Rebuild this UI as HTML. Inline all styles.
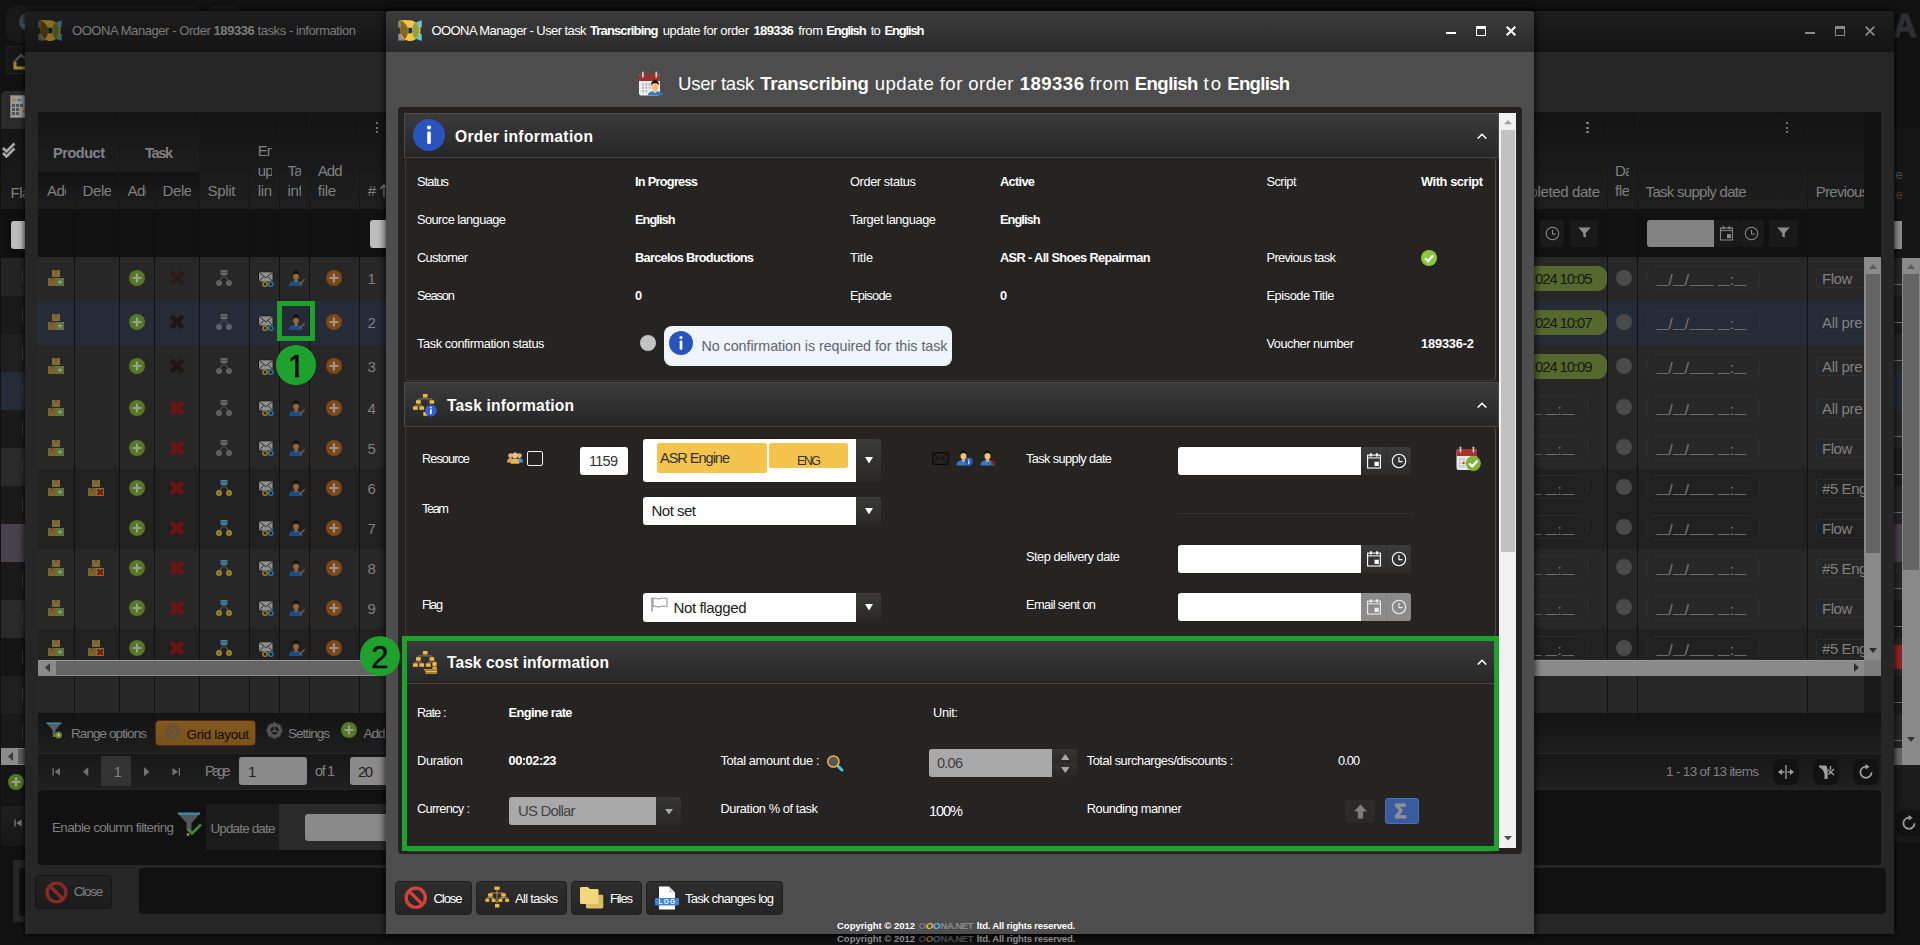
<!DOCTYPE html>
<html lang="en"><head><meta charset="utf-8"><title>OOONA Manager - User task update</title>
<style>
html,body{margin:0;padding:0;background:#111112;}
body{width:1920px;height:945px;position:relative;overflow:hidden;font-family:"Liberation Sans",sans-serif;}
div,span.t,svg.i{position:absolute;box-sizing:border-box;}
span.t{line-height:1;white-space:nowrap;}
b{font-weight:700;}

.hd{background:linear-gradient(#141414,#1e1e1e);}
.vl{background:#0e0e0e;width:1px;}

</style></head><body>
<svg width="0" height="0" style="position:absolute"><defs>

<symbol id="logo" viewBox="0 0 24 22">
<rect x="0" y="0.800" width="3" height="7" fill="#8d8f96"/>
<path d="M0 14 L3 14 L7 21 L0 21Z" fill="#8d8f96"/>
<path d="M18.500 2.300 L24 0.200 L24 7.300 L21.500 8Z" fill="#5bc8f5"/>
<path d="M18.500 19.500 L24 21.600 L24 14.300 L21.500 13.600Z" fill="#5bc8f5"/>
<path d="M2.200 0 L12 0.200 C17.500 0.500 22.800 5 22.800 10.800 C22.800 16.500 18 21.400 12.400 21.400 C8 21.400 4 19 2.500 15Z" fill="#f5c547"/>
<path d="M2.200 0 C6 2 10 6 10 10.800 C10 15 8.500 17.500 6.800 19.400 C4 17.500 2.200 14 2.200 10.800Z" fill="#86691f"/>
<path d="M17.900 2 C22.600 6 22.600 15.500 17.900 19.700 C13 15.500 13 6 17.900 2Z" fill="#94a046"/>
<rect x="9.300" y="8" width="4.800" height="5.600" rx="1" fill="#2e2e2e"/>
<rect x="9.300" y="8.300" width="1.200" height="5" fill="#8d8f96"/>
<path d="M13.500 8.200 C14.800 9.500 14.800 12.200 13.500 13.500 C15.200 12.600 15.600 9.600 13.500 8.200Z" fill="#5bc8f5"/>
</symbol>
<symbol id="logod" viewBox="0 0 24 22">
<rect x="0" y="0.800" width="3" height="7" fill="#46484b"/>
<path d="M0 14 L3 14 L7 21 L0 21Z" fill="#46484b"/>
<path d="M18.500 2.300 L24 0.200 L24 7.300 L21.500 8Z" fill="#2e647b"/>
<path d="M18.500 19.500 L24 21.600 L24 14.300 L21.500 13.600Z" fill="#2e647b"/>
<path d="M2.200 0 L12 0.200 C17.500 0.500 22.800 5 22.800 10.800 C22.800 16.500 18 21.400 12.400 21.400 C8 21.400 4 19 2.500 15Z" fill="#8b6f26"/>
<path d="M2.200 0 C6 2 10 6 10 10.800 C10 15 8.500 17.500 6.800 19.400 C4 17.500 2.200 14 2.200 10.800Z" fill="#43340f"/>
<path d="M17.900 2 C22.600 6 22.600 15.500 17.900 19.700 C13 15.500 13 6 17.900 2Z" fill="#4a5023"/>
<rect x="9.300" y="8" width="4.800" height="5.600" rx="1" fill="#171717"/>
<rect x="9.300" y="8.300" width="1.200" height="5" fill="#46484b"/>
<path d="M13.500 8.200 C14.800 9.500 14.800 12.200 13.500 13.500 C15.200 12.600 15.600 9.600 13.500 8.200Z" fill="#2e647b"/>
</symbol>
<symbol id="calperson" viewBox="0 0 26 26">
<rect x="1" y="3" width="21" height="21.5" rx="2" fill="#eceef0"/>
<path d="M1 5 a2 2 0 0 1 2 -2 h17 a2 2 0 0 1 2 2 v5 h-21z" fill="#9c322e"/>
<rect x="4" y="0.6" width="1.8" height="6" rx="0.9" fill="#c9d0d4"/><rect x="17.4" y="0.6" width="1.8" height="6" rx="0.9" fill="#c9d0d4"/>
<g fill="#b9bbbe"><rect x="4" y="12.3" width="2" height="2.3"/><rect x="7.3" y="12.3" width="2" height="2.3"/><rect x="10.6" y="12.3" width="2" height="2.3"/><rect x="4" y="15.7" width="2" height="2.3"/><rect x="7.3" y="15.7" width="2" height="2.3"/><rect x="10.6" y="15.7" width="2" height="2.3"/><rect x="4" y="19.1" width="2" height="2.3"/><rect x="7.3" y="19.1" width="2" height="2.3"/></g>
<path d="M10 24.3 C10 21 13 20.2 17 20 C21 20.2 24.6 21.2 25 24.3Z" fill="#2f7bc6"/>
<path d="M14.7 19.5 h4.6 l0 1.2 l-2.3 1.6 l-2.3 -1.6z" fill="#f3be79"/>
<ellipse cx="17" cy="15.2" rx="3.5" ry="4.6" fill="#f3be79"/>
<path d="M13.3 14.6 C12.8 10.5 15 9.2 17 9.2 C19.3 9.2 21.3 10.6 20.7 14.6 C20.2 12.6 19 12.3 17 12.3 C15 12.3 13.8 12.7 13.3 14.6Z" fill="#16120f"/>
</symbol>
<symbol id="info" viewBox="0 0 32 32">
<circle cx="16" cy="16" r="16" fill="#2a53be"/>
<circle cx="16" cy="8.6" r="2.1" fill="#fff"/>
<rect x="14.2" y="12.6" width="3.6" height="12.4" rx="1.3" fill="#fff"/>
</symbol>
<symbol id="org" viewBox="0 0 24 24">
<g stroke="#c9a44a" stroke-width="1" fill="none"><path d="M12 5 v3.5 M5 12 v-2.5 h14 v2.5 M12 8.5 v3"/></g>
<g fill="#f1b93c"><rect x="9.5" y="1" width="5" height="4.2"/><rect x="2.4" y="11.5" width="5" height="4.2"/><rect x="9.5" y="11.5" width="5" height="4.2"/><rect x="16.6" y="11.5" width="5" height="4.2"/></g>
</symbol>
<symbol id="taskinfo" viewBox="0 0 24 24">
<g stroke="#8e8a80" stroke-width="0.800" fill="none"><path d="M12.250 3.500 V4.900 M5.400 6.200 V4.900 H18.900 V6.200 M5.400 9.700 V11.200 M2.400 12.300 V11.200 H8.700 V12.300"/></g>
<g fill="#f1b93c"><rect x="9.900" y="0" width="4.700" height="3.500"/><rect x="3" y="6.200" width="4.800" height="3.500"/><rect x="16.500" y="6.200" width="4.700" height="3.500"/><rect x="0" y="12.300" width="4.800" height="3.500"/><rect x="6.300" y="12.300" width="4.800" height="3.500"/><rect x="10.300" y="18" width="4.100" height="3.800"/></g>
<circle cx="17.900" cy="16.600" r="5.900" fill="#2f5fd0"/><circle cx="17.900" cy="13.600" r="0.950" fill="#fff"/><rect x="17.100" y="15.300" width="1.600" height="4.700" fill="#fff"/>
</symbol>
<symbol id="taskcost" viewBox="0 0 24 24">
<g stroke="#8e8a80" stroke-width="0.800" fill="none"><path d="M12.250 3.500 V4.900 M5.400 6.200 V4.900 H18.900 V6.200 M5.400 9.700 V11.200 M2.400 12.300 V11.200 H8.700 V12.300"/></g>
<g fill="#f1b93c"><rect x="9.900" y="0" width="4.700" height="3.500"/><rect x="3" y="6.200" width="4.800" height="3.500"/><rect x="16.500" y="6.200" width="4.700" height="3.500"/><rect x="0" y="12.300" width="4.800" height="3.500"/><rect x="6.300" y="12.300" width="4.800" height="3.500"/><rect x="12.900" y="12.300" width="4.800" height="3.500"/></g>
<path d="M18.900 9.700 V11 M15.300 12.300 V11.200 H18.900" stroke="#8e8a80" stroke-width="0.800" fill="none"/>
<circle cx="21.500" cy="13" r="2.200" fill="#f1b93c" stroke="#d9a02c" stroke-width="0.600"/>
<g fill="#e3ad3a"><rect x="19.300" y="15.600" width="4.500" height="2.300"/><rect x="10.900" y="18.200" width="13.100" height="1.300"/><rect x="12.400" y="19.900" width="11.600" height="1.200" fill="#f1c04a"/><rect x="12.400" y="21.400" width="11.600" height="1.300"/></g>
</symbol>
<symbol id="alltasks" viewBox="0 0 24 24">
<g stroke="#b9a06a" stroke-width="0.900" fill="none"><path d="M12 3.700 V7 M5.400 8 V7 H18.600 V8 M5.400 10.400 V11.700 M2.300 12.700 V11.700 H8.600 V12.700 M18.600 10.400 V11.700 M15.400 12.700 V11.700 H22 V12.700 M12 7 V16.600 M12 16.600"/><path d="M5.400 11.700 L12 16.600 L18.600 11.700" stroke-width="0.600"/></g>
<g fill="#f1b93c"><rect x="9.400" y="0.600" width="5.200" height="3.300"/><rect x="3.100" y="7.400" width="4.600" height="3.200"/><rect x="16.200" y="7.400" width="4.600" height="3.200"/>
<rect x="0.400" y="12.700" width="3.800" height="3.200"/><rect x="6.700" y="12.700" width="3.800" height="3.200"/><rect x="13.500" y="12.700" width="3.800" height="3.200"/><rect x="20.200" y="12.700" width="3.800" height="3.200"/><rect x="10" y="17.900" width="4.400" height="3.600"/></g>
</symbol>
<symbol id="noentry" viewBox="0 0 24 24">
<circle cx="12" cy="12" r="9.8" fill="none" stroke="#d6413c" stroke-width="3.4"/>
<path d="M5.2 5.2 L18.8 18.8" stroke="#d6413c" stroke-width="3.4"/>
</symbol>
<symbol id="noentryd" viewBox="0 0 24 24">
<circle cx="12" cy="12" r="9.8" fill="none" stroke="#8a2a27" stroke-width="3.4"/>
<path d="M5.2 5.2 L18.8 18.8" stroke="#8a2a27" stroke-width="3.4"/>
</symbol>
<symbol id="folders" viewBox="0 0 24 24">
<path d="M6 7 h7 l2 2 h7.5 a1.5 1.5 0 0 1 1.500 1.500 v11 a1.500 1.500 0 0 1 -1.500 1.500 h-15 a1.500 1.500 0 0 1 -1.500 -1.500z" fill="#d9bb62"/>
<path d="M0 2.500 a1.500 1.500 0 0 1 1.500 -1.500 h6.500 l2 2 h7.500 a1.500 1.500 0 0 1 1.500 1.500 v12.500 a1.500 1.500 0 0 1 -1.500 1.500 h-16 a1.500 1.500 0 0 1 -1.500 -1.500z" fill="#f2d77c"/>
</symbol>
<symbol id="logfile" viewBox="0 0 24 24">
<path d="M4 0.500 h10 l6 6 v17 h-16z" fill="#fff"/><path d="M14 0.500 l6 6 h-6z" fill="#d5d9dd"/>
<rect x="0" y="12" width="24" height="7.600" rx="1" fill="#3f83d6"/>
</symbol>
<symbol id="people" viewBox="0 0 16 12">
<circle cx="3.600" cy="3.600" r="2.400" fill="#e8b27a"/><path d="M0 10.500 c0 -3.500 2 -4.500 3.600 -4.500 s3.600 1 3.600 4.500z" fill="#e0a050"/>
<circle cx="12.400" cy="3.600" r="2.400" fill="#e8b27a"/><path d="M8.800 10.500 c0 -3.500 2 -4.500 3.600 -4.500 s3.600 1 3.600 4.500z" fill="#4f8fd0"/>
<circle cx="8" cy="3.400" r="2.800" fill="#f0c08a"/><path d="M3.600 11.800 c0 -4.200 2.400 -5.400 4.400 -5.400 s4.400 1.200 4.400 5.400z" fill="#e6b84c"/>
</symbol>
<symbol id="env" viewBox="0 0 17 13">
<rect x="0.600" y="0.600" width="15.800" height="11.800" rx="1.500" fill="none" stroke="#0b0b0b" stroke-width="1.100"/>
<path d="M1 1.200 L8.500 7.500 L16 1.200 M1 12 L6.300 6 M16 12 L10.700 6" fill="none" stroke="#0b0b0b" stroke-width="1"/>
</symbol>
<symbol id="userinfo" viewBox="0 0 17 17">
<path d="M0.500 16.500 C0.500 12.500 3 11.500 7.500 11.300 C12 11.500 14.500 12.500 14.500 16.500Z" fill="#2f7bc6"/>
<path d="M5.800 10.500 h3.400 v1.200 l-1.700 1.300 l-1.700 -1.300z" fill="#f3be79"/>
<ellipse cx="7.500" cy="6.800" rx="3" ry="3.900" fill="#f3be79"/>
<path d="M4.300 6.400 C3.900 2.500 5.800 1.300 7.500 1.300 C9.400 1.300 11.200 2.600 10.700 6.400 C10.200 4.600 9.200 4.300 7.500 4.300 C5.800 4.300 4.800 4.700 4.300 6.400Z" fill="#16120f"/>
<circle cx="12.800" cy="12.600" r="4" fill="#2a53be"/><rect x="12.100" y="10.200" width="1.400" height="1.300" fill="#cfe0ff"/><rect x="12.100" y="12" width="1.400" height="3.200" fill="#cfe0ff"/>
</symbol>
<symbol id="userx" viewBox="0 0 17 17">
<path d="M0.500 16.500 C0.500 12.500 3 11.500 7.500 11.300 C12 11.500 14.500 12.500 14.500 16.500Z" fill="#2f7bc6"/>
<path d="M5.800 10.500 h3.400 v1.200 l-1.700 1.300 l-1.700 -1.300z" fill="#f3be79"/>
<ellipse cx="7.500" cy="6.800" rx="3" ry="3.900" fill="#f3be79"/>
<path d="M4.300 6.400 C3.900 2.500 5.800 1.300 7.500 1.300 C9.400 1.300 11.200 2.600 10.700 6.400 C10.200 4.600 9.200 4.300 7.500 4.300 C5.800 4.300 4.800 4.700 4.300 6.400Z" fill="#16120f"/>
<path d="M11.300 12.300 l3.600 3.600 M14.900 12.300 l-3.600 3.600" stroke="#a01818" stroke-width="1.500"/>
</symbol>
<symbol id="cal" viewBox="0 0 14 16">
<rect x="0.600" y="2.100" width="12.800" height="12.900" fill="none" stroke="currentColor" stroke-width="1.100"/>
<path d="M0.600 4.900 H13.400" stroke="currentColor" stroke-width="1"/>
<rect x="2.900" y="0.300" width="1.900" height="3.200" fill="currentColor"/><rect x="9.100" y="0.300" width="1.900" height="3.200" fill="currentColor"/>
<rect x="7.500" y="8.700" width="4.300" height="4.300" fill="currentColor"/>
</symbol>
<symbol id="clock" viewBox="0 0 16 16">
<circle cx="8" cy="8" r="6.700" fill="none" stroke="currentColor" stroke-width="1.100"/>
<path d="M8 4 V8.600 H11.600" fill="none" stroke="currentColor" stroke-width="1.100"/>
</symbol>
<symbol id="calcheck" viewBox="0 0 25 25">
<rect x="0.500" y="3" width="20.500" height="21" rx="2" fill="#e6e8ea"/>
<path d="M0.500 5 a2 2 0 0 1 2 -2 h16.500 a2 2 0 0 1 2 2 v5 h-20.500z" fill="#a7332f"/>
<rect x="3.600" y="0.500" width="1.700" height="6" rx="0.850" fill="#c9d0d4"/><rect x="16.600" y="0.500" width="1.700" height="6" rx="0.850" fill="#c9d0d4"/>
<g fill="#bcbec1"><rect x="3.300" y="12.500" width="2" height="2.200"/><rect x="6.600" y="12.500" width="2" height="2.200"/><rect x="3.300" y="15.900" width="2" height="2.200"/><rect x="3.300" y="19.300" width="2" height="2.200"/><rect x="6.600" y="19.300" width="2" height="2.200"/></g>
<rect x="6.600" y="15.900" width="2" height="2.200" fill="#c0322c"/>
<circle cx="17.300" cy="17.300" r="7.600" fill="#7eb338"/>
<path d="M13.200 17.500 L16.200 20.300 L21.600 14.600" fill="none" stroke="#fff" stroke-width="2.300"/>
</symbol>
<symbol id="flag" viewBox="0 0 17 15">
<path d="M1 0.500 V14.500" stroke="#8a8a8a" stroke-width="1.300" fill="none"/>
<path d="M2 1.500 C4.500 0 6.500 3 9 1.800 C11.500 0.600 13.500 1.200 16 1.500 V9.500 C13.500 9.200 11.500 8.600 9 9.800 C6.500 11 4.500 8 2 9.500Z" fill="#fff" stroke="#8a8a8a" stroke-width="1"/>
</symbol>
<symbol id="mag" viewBox="0 0 17 17">
<path d="M11.400 11.500 L14.900 15" stroke="#5bc0e8" stroke-width="3" stroke-linecap="round"/>
<circle cx="6.400" cy="6.500" r="5.600" fill="#595657" stroke="#f0b93a" stroke-width="1.500"/>
</symbol>
<symbol id="uparrow" viewBox="0 0 16 16">
<path d="M8 0.500 L15 8 H10.800 V15.500 H5.200 V8 H1Z" fill="#7d7d7d"/>
</symbol>
<symbol id="chev" viewBox="0 0 10 6"><path d="M0.700 5.600 L5 1.200 L9.300 5.600" fill="none" stroke="#fff" stroke-width="1.500"/></symbol>
<symbol id="tri" viewBox="0 0 10 6" preserveAspectRatio="none"><path d="M0 0 H10 L5 6Z" fill="currentColor"/></symbol>
<symbol id="triu" viewBox="0 0 10 6" preserveAspectRatio="none"><path d="M0 6 H10 L5 0Z" fill="currentColor"/></symbol>
<symbol id="tril" viewBox="0 0 6 10" preserveAspectRatio="none"><path d="M6 0 V10 L0 5Z" fill="currentColor"/></symbol>
<symbol id="trir" viewBox="0 0 6 10" preserveAspectRatio="none"><path d="M0 0 V10 L6 5Z" fill="currentColor"/></symbol>
<symbol id="greyperson" viewBox="0 0 16 16"></symbol>

<symbol id="boxes" viewBox="0 0 16 16">
<rect x="4" y="0" width="8" height="7" fill="#806a36"/><rect x="7" y="0" width="2" height="3" fill="#6a5628"/>
<rect x="0" y="8" width="8" height="8" fill="#78622e"/><rect x="3" y="8" width="2" height="3" fill="#655224"/>
<rect x="8" y="8" width="8" height="8" fill="#897238"/>
<circle cx="12" cy="12" r="4" fill="#52733a"/><path d="M12 9.600 v4.800 M9.600 12 h4.800" stroke="#8fa080" stroke-width="1.300"/>
</symbol>
<symbol id="boxesx" viewBox="0 0 16 16">
<rect x="4" y="0" width="8" height="7" fill="#806a36"/><rect x="7" y="0" width="2" height="3" fill="#6a5628"/>
<rect x="0" y="8" width="8" height="8" fill="#78622e"/><rect x="3" y="8" width="2" height="3" fill="#655224"/>
<rect x="8" y="8" width="8" height="8" fill="#897238"/>
<path d="M9.500 9.500 l5.500 5.500 M15 9.500 l-5.500 5.500" stroke="#7a1612" stroke-width="2.400"/>
</symbol>
<symbol id="gplus" viewBox="0 0 16 16"><circle cx="8" cy="8" r="8" fill="#557826"/><path d="M8 3.600 v8.800 M3.600 8 h8.800" stroke="#9aa28e" stroke-width="2.200"/></symbol>
<symbol id="oplus" viewBox="0 0 16 16"><circle cx="8" cy="8" r="8" fill="#7e4816"/><path d="M8 3.600 v8.800 M3.600 8 h8.800" stroke="#a09389" stroke-width="2.200"/></symbol>
<symbol id="redx" viewBox="0 0 16 16"><path d="M2.200 2.200 L13.800 13.800 M13.800 2.200 L2.200 13.800" stroke="currentColor" stroke-width="4.600"/></symbol>
<symbol id="split" viewBox="0 0 16 16">
<path d="M8 5 L3 11 M8 5 L13 11" stroke="#6a6a6a" stroke-width="1"/>
<rect x="4.600" y="0" width="6.800" height="5" fill="#3a7f9f"/><rect x="4.600" y="2.100" width="6.800" height="0.800" fill="#2a5d78"/>
<circle cx="3" cy="13" r="3" fill="#9a822f"/><circle cx="13" cy="13" r="3" fill="#9a822f"/><circle cx="3" cy="13" r="1.200" fill="#7a6624"/><circle cx="13" cy="13" r="1.200" fill="#7a6624"/>
</symbol>
<symbol id="splitg" viewBox="0 0 16 16">
<path d="M8 5 L3 11 M8 5 L13 11" stroke="#5a5a5a" stroke-width="1"/>
<rect x="4.600" y="0" width="6.800" height="5" fill="#666"/><rect x="4.600" y="2.100" width="6.800" height="0.800" fill="#444"/>
<circle cx="3" cy="13" r="3" fill="#606060"/><circle cx="13" cy="13" r="3" fill="#606060"/>
</symbol>
<symbol id="envlink" viewBox="0 0 16 16">
<rect x="0.500" y="0.800" width="14.600" height="10.200" rx="1" fill="#8f8f8f" stroke="#151515" stroke-width="1"/>
<path d="M1 1.300 L7.800 6.800 L14.600 1.300 M1 10.500 L5.600 5.600 M14.600 10.500 L10 5.600" fill="none" stroke="#222" stroke-width="0.900"/>
<circle cx="7" cy="13.200" r="2.200" fill="none" stroke="#9a7b27" stroke-width="1.500"/><circle cx="12.800" cy="13.200" r="2.200" fill="none" stroke="#2a7294" stroke-width="1.500"/><path d="M8 13.200 h3.600" stroke="#5a7a5a" stroke-width="1.300"/>
</symbol>
<symbol id="userpen" viewBox="0 0 16 16">
<path d="M0 16 C0 12 2.500 11 7 10.800 C11.500 11 13.500 12 13.500 16Z" fill="#1c5084"/>
<path d="M5.400 10 h3.200 v1.200 l-1.600 1.200 l-1.600 -1.200z" fill="#936640"/>
<ellipse cx="7" cy="6.200" rx="2.900" ry="3.800" fill="#936640"/>
<path d="M3.900 5.800 C3.500 2 5.300 0.600 7 0.600 C8.900 0.600 10.600 2 10.100 5.800 C9.600 4 8.700 3.700 7 3.700 C5.300 3.700 4.400 4.100 3.900 5.800Z" fill="#120e0c"/>
<path d="M10.500 14 L15.200 8.800 L16 9.700 L11.500 14.800Z" fill="#a05a28"/>
</symbol>
<symbol id="funnel" viewBox="0 0 18 16"><path d="M0.500 0.500 H17.500 L10.800 8 V14.500 L7.200 12.500 V8Z" fill="currentColor"/></symbol>
<symbol id="gear" viewBox="0 0 18 18">
<g fill="currentColor"><rect x="7.600" y="0.300" width="2.800" height="17.400" rx="0.600"/><rect x="7.600" y="0.300" width="2.800" height="17.400" rx="0.600" transform="rotate(45 9 9)"/><rect x="7.600" y="0.300" width="2.800" height="17.400" rx="0.600" transform="rotate(90 9 9)"/><rect x="7.600" y="0.300" width="2.800" height="17.400" rx="0.600" transform="rotate(135 9 9)"/>
<rect x="8" y="0.800" width="2" height="16.400" transform="rotate(22.500 9 9)"/><rect x="8" y="0.800" width="2" height="16.400" transform="rotate(67.500 9 9)"/><rect x="8" y="0.800" width="2" height="16.400" transform="rotate(112.500 9 9)"/><rect x="8" y="0.800" width="2" height="16.400" transform="rotate(157.500 9 9)"/></g>
<circle cx="9" cy="9" r="6.600" fill="currentColor"/>
<circle cx="9" cy="9" r="4.300" fill="var(--gbg,#1a1a1a)"/>
<g stroke="currentColor" stroke-width="1.300"><path d="M9 9 L9 4 M9 9 L13.300 11.500 M9 9 L4.700 11.500"/></g>
<circle cx="9" cy="9" r="1.700" fill="currentColor"/>
</symbol>
<symbol id="first" viewBox="0 0 10 10"><rect x="0.500" y="0.500" width="1.600" height="9" fill="currentColor"/><path d="M9.500 0.500 V9.500 L3 5Z" fill="currentColor"/></symbol>
<symbol id="last" viewBox="0 0 10 10"><rect x="7.900" y="0.500" width="1.600" height="9" fill="currentColor"/><path d="M0.500 0.500 V9.500 L7 5Z" fill="currentColor"/></symbol>
<symbol id="refresh" viewBox="0 0 16 16">
<path d="M13.600 8.200 A5.600 5.600 0 1 1 8 2.600" fill="none" stroke="currentColor" stroke-width="1.700"/>
<path d="M7.600 0 L11.600 2.800 L7.600 5.600Z" fill="currentColor"/>
</symbol>

</defs></svg>
<div style="left:6px;top:6px;width:197px;height:36px;background:#191919;border-radius:10px;"></div>
<div style="left:206px;top:6px;width:36px;height:36px;background:#191919;border-radius:8px;"></div>
<div style="left:18.5px;top:12px;width:20px;height:20px;background:#43484d;border-radius:50%;"></div>
<div style="left:22px;top:24px;width:8px;height:6px;background:#2e7a99;border-radius:0 0 0 6px;"></div>
<div style="left:6px;top:46px;width:20px;height:28px;background:#161616;border:1px solid #222;"></div>
<svg class="i" style="left:12px;top:53px" width="14" height="18"><path d="M2 9 L9 2 L14 6" fill="none" stroke="#4a4f55" stroke-width="2.4"/><path d="M3 9 V15 H14" fill="none" stroke="#a9862b" stroke-width="3"/></svg>
<div style="left:1px;top:91px;width:25px;height:38px;background:#2b2b2b;border-radius:5px 0 0 0;"></div>
<svg class="i" style="left:10px;top:95px" width="16" height="24"><rect x="0.500" y="0.500" width="15" height="22" fill="#9a9a9a" stroke="#777"/><rect x="2" y="4" width="4" height="2" fill="#a9862b"/><rect x="7" y="4" width="4" height="2" fill="#3b7f9f"/><g fill="#555"><rect x="2" y="9" width="3" height="3"/><rect x="6" y="9" width="3" height="3"/><rect x="10" y="9" width="3" height="3"/><rect x="2" y="13" width="3" height="3"/><rect x="6" y="13" width="3" height="3"/><rect x="2" y="17" width="3" height="3"/><rect x="6" y="17" width="3" height="3"/></g><path d="M12 17 L16 12 L16 18Z" fill="#b5622a"/></svg>
<div style="left:1px;top:129px;width:25px;height:80px;background:linear-gradient(#161616,#1b1b1b);"></div>
<svg class="i" style="left:2px;top:142px" width="15" height="16"><path d="M1 6 L4.500 9.500 L12.500 1.500" fill="none" stroke="#a9a9a9" stroke-width="2.600"/><path d="M1 11 L4.500 14.500 L12.500 6.500" fill="none" stroke="#a9a9a9" stroke-width="2.600"/></svg>
<span class="t" style="left:10.50px;top:184.80px;font-size:15px;color:#808080;letter-spacing:-0.469px;">Fla</span>
<div style="left:1px;top:209px;width:25px;height:48px;background:#0f0f0f;"></div>
<div style="left:11px;top:221px;width:16px;height:28px;background:#bdbdbd;border-radius:3px 0 0 3px;"></div>
<div style="left:1px;top:258px;width:25px;height:38px;background:#242424;"></div>
<div style="left:22px;top:270px;width:1px;height:14px;background:#3a3a3a;"></div>
<div style="left:1px;top:296px;width:25px;height:38px;background:#1a1a1a;"></div>
<div style="left:22px;top:308px;width:1px;height:14px;background:#3a3a3a;"></div>
<div style="left:1px;top:334px;width:25px;height:38px;background:#1f1f1f;"></div>
<div style="left:22px;top:346px;width:1px;height:14px;background:#3a3a3a;"></div>
<div style="left:1px;top:372px;width:25px;height:38px;background:#262b38;"></div>
<div style="left:22px;top:384px;width:1px;height:14px;background:#3a3a3a;"></div>
<div style="left:1px;top:410px;width:25px;height:38px;background:#1a1a1a;"></div>
<div style="left:22px;top:422px;width:1px;height:14px;background:#3a3a3a;"></div>
<div style="left:1px;top:448px;width:25px;height:38px;background:#2a2a2a;"></div>
<div style="left:22px;top:460px;width:1px;height:14px;background:#3a3a3a;"></div>
<div style="left:1px;top:486px;width:25px;height:38px;background:#1a1a1a;"></div>
<div style="left:22px;top:498px;width:1px;height:14px;background:#3a3a3a;"></div>
<div style="left:1px;top:524px;width:25px;height:38px;background:#474149;"></div>
<div style="left:22px;top:536px;width:1px;height:14px;background:#3a3a3a;"></div>
<div style="left:1px;top:562px;width:25px;height:38px;background:#1a1a1a;"></div>
<div style="left:22px;top:574px;width:1px;height:14px;background:#3a3a3a;"></div>
<div style="left:1px;top:600px;width:25px;height:38px;background:#2a2a2a;"></div>
<div style="left:22px;top:612px;width:1px;height:14px;background:#3a3a3a;"></div>
<div style="left:1px;top:638px;width:25px;height:38px;background:#151515;"></div>
<div style="left:22px;top:650px;width:1px;height:14px;background:#3a3a3a;"></div>
<div style="left:1px;top:676px;width:25px;height:38px;background:#1f1f1f;"></div>
<div style="left:22px;top:688px;width:1px;height:14px;background:#3a3a3a;"></div>
<div style="left:1px;top:714px;width:25px;height:38px;background:#1a1a1a;"></div>
<div style="left:22px;top:726px;width:1px;height:14px;background:#3a3a3a;"></div>
<div style="left:1px;top:748px;width:25px;height:17px;background:#8c8c8c;"></div>
<div style="left:18px;top:749px;width:8px;height:15px;background:#5e5e5e;"></div>
<svg class="i" style="left:8px;top:752px;color:#3a3a3a" width="5" height="9"><use href="#tril"/></svg>
<div style="left:1px;top:765px;width:25px;height:40px;background:#151515;"></div>
<svg class="i" style="left:8px;top:774px;" width="16" height="16"><use href="#gplus"/></svg>
<div style="left:1px;top:806px;width:25px;height:40px;background:linear-gradient(#1f1f1f,#171717);"></div>
<svg class="i" style="left:14px;top:818px;color:#7a7a7a" width="8" height="10"><use href="#first"/></svg>
<div style="left:13px;top:860px;width:14px;height:62px;background:#262626;"></div>
<div style="left:19px;top:868px;width:8px;height:48px;background:#101010;border-radius:4px 0 0 4px;"></div>
<span class="t" style="left:1893.00px;top:9.07px;font-size:33px;color:#2d2f31;font-weight:700;letter-spacing:-1.832px;-webkit-text-stroke:1px #2d2f31;">A</span>
<div style="left:1894px;top:128px;width:26px;height:130px;background:#161616;"></div>
<span class="t" style="left:1895.50px;top:168.00px;font-size:13px;color:#4a5560;letter-spacing:-0.325px;">e</span>
<span class="t" style="left:1895.50px;top:188.00px;font-size:13px;color:#5a3a2a;letter-spacing:-0.325px;">e</span>
<div style="left:1894px;top:221px;width:8px;height:28px;background:#8c8c8c;"></div>
<div style="left:1894px;top:258px;width:8px;height:38px;background:#262626;"></div>
<div style="left:1894px;top:284px;width:8px;height:1px;background:#6a6a6a;"></div>
<div style="left:1894px;top:296px;width:8px;height:38px;background:#1d1d1d;"></div>
<div style="left:1894px;top:322px;width:8px;height:1px;background:#6a6a6a;"></div>
<div style="left:1894px;top:334px;width:8px;height:38px;background:#262626;"></div>
<div style="left:1894px;top:360px;width:8px;height:1px;background:#6a6a6a;"></div>
<div style="left:1894px;top:372px;width:8px;height:38px;background:#1d1d1d;"></div>
<div style="left:1894px;top:398px;width:8px;height:1px;background:#6a6a6a;"></div>
<div style="left:1894px;top:410px;width:8px;height:38px;background:#262626;"></div>
<div style="left:1894px;top:436px;width:8px;height:1px;background:#6a6a6a;"></div>
<div style="left:1894px;top:448px;width:8px;height:38px;background:#1d1d1d;"></div>
<div style="left:1894px;top:474px;width:8px;height:1px;background:#6a6a6a;"></div>
<div style="left:1894px;top:486px;width:8px;height:38px;background:#262626;"></div>
<div style="left:1894px;top:512px;width:8px;height:1px;background:#6a6a6a;"></div>
<div style="left:1894px;top:524px;width:8px;height:38px;background:#1d1d1d;"></div>
<div style="left:1894px;top:550px;width:8px;height:1px;background:#6a6a6a;"></div>
<div style="left:1894px;top:562px;width:8px;height:38px;background:#262626;"></div>
<div style="left:1894px;top:588px;width:8px;height:1px;background:#6a6a6a;"></div>
<div style="left:1894px;top:600px;width:8px;height:38px;background:#1d1d1d;"></div>
<div style="left:1894px;top:626px;width:8px;height:1px;background:#6a6a6a;"></div>
<div style="left:1894px;top:638px;width:8px;height:38px;background:#262626;"></div>
<div style="left:1894px;top:664px;width:8px;height:1px;background:#6a6a6a;"></div>
<div style="left:1894px;top:676px;width:8px;height:38px;background:#1d1d1d;"></div>
<div style="left:1894px;top:702px;width:8px;height:1px;background:#6a6a6a;"></div>
<div style="left:1894px;top:714px;width:8px;height:38px;background:#262626;"></div>
<div style="left:1894px;top:740px;width:8px;height:1px;background:#6a6a6a;"></div>
<div style="left:1894px;top:372px;width:8px;height:38px;background:#262b38;"></div>
<div style="left:1894px;top:524px;width:8px;height:38px;background:#474149;"></div>
<div style="left:1894px;top:645px;width:8px;height:24px;background:#8e2323;"></div>
<div style="left:1902px;top:258px;width:18px;height:490px;background:#8a8a8a;"></div>
<div style="left:1903px;top:274px;width:16px;height:296px;background:#646464;"></div>
<svg class="i" style="left:1907px;top:264px;color:#5a5a5a" width="8" height="5"><use href="#triu"/></svg>
<svg class="i" style="left:1907px;top:737px;color:#333" width="8" height="5"><use href="#tri"/></svg>
<div style="left:1894px;top:748px;width:26px;height:17px;background:#8a8a8a;"></div>
<div style="left:1894px;top:748px;width:8px;height:17px;background:#646464;"></div>
<div style="left:1894px;top:765px;width:26px;height:41px;background:#1b1b1b;"></div>
<div style="left:1894px;top:806px;width:26px;height:36px;background:#191919;"></div>
<div style="left:1896px;top:810px;width:24px;height:26px;background:#121212;border-radius:8px 0 0 8px;"></div>
<svg class="i" style="left:1901px;top:815px;color:#a0a0a0" width="16" height="16"><use href="#refresh"/></svg>
<div style="left:25px;top:10.5px;width:1869px;height:923.5px;background:#262626;border-radius:4px 4px 0 0;box-shadow:0 0 6px #000;"></div>
<div style="left:25px;top:11px;width:1869px;height:40.5px;background:linear-gradient(#1e1e1e,#141414);border-radius:4px 4px 0 0;"></div>
<svg class="i" style="left:38px;top:20px;" width="24" height="21.5"><use href="#logod"/></svg>
<span class="t" style="left:72.00px;top:24.30px;font-size:13px;color:#7c7c7c;letter-spacing:-0.430px;">OOONA Manager - Order <b>189336</b> tasks - information</span>
<div style="left:1805px;top:32px;width:10px;height:2px;background:#8a8a8a;"></div>
<div style="left:1835px;top:26px;width:10px;height:10px;border:1px solid #8a8a8a;border-top:3px solid #8a8a8a;"></div>
<svg class="i" style="left:1865px;top:26px" width="10" height="10"><path d="M0.700 0.700 L9.300 9.300 M9.300 0.700 L0.700 9.300" stroke="#8a8a8a" stroke-width="1.800"/></svg>
<div class="hd" style="left:38px;top:112px;width:1843px;height:97px;"></div>
<div style="left:38px;top:209px;width:1843px;height:48px;background:#111111;"></div>
<div style="left:38px;top:112px;width:81px;height:60px;background:linear-gradient(#151515,#1d1d1d);"></div>
<div style="left:119px;top:112px;width:80px;height:60px;background:linear-gradient(#151515,#1d1d1d);"></div>
<div style="left:38px;top:172px;width:161px;height:37px;background:linear-gradient(#121212,#1e1e1e);"></div>
<span class="t" style="left:53.00px;top:145.73px;font-size:14.5px;color:#80838c;font-weight:700;letter-spacing:-0.463px;">Product</span>
<span class="t" style="left:145.00px;top:145.73px;font-size:14.5px;color:#808080;font-weight:700;letter-spacing:-1.325px;">Task</span>
<div style="left:47px;top:181.30px;width:19px;height:21px;overflow:hidden"><span class="t" style="left:0;top:2px;font-size:15px;color:#808080;letter-spacing:-0.601px">Add</span></div>
<div style="left:82.5px;top:181.30px;width:28px;height:21px;overflow:hidden"><span class="t" style="left:0;top:2px;font-size:15px;color:#808080;letter-spacing:-0.390px">Delete</span></div>
<div style="left:127.5px;top:181.30px;width:18px;height:21px;overflow:hidden"><span class="t" style="left:0;top:2px;font-size:15px;color:#808080;letter-spacing:-0.601px">Add</span></div>
<div style="left:162.5px;top:181.30px;width:28px;height:21px;overflow:hidden"><span class="t" style="left:0;top:2px;font-size:15px;color:#808080;letter-spacing:-0.390px">Delete</span></div>
<span class="t" style="left:207.50px;top:183.30px;font-size:15px;color:#808080;letter-spacing:-0.295px;">Split</span>
<div style="left:257.7px;top:141.30px;width:14px;height:21px;overflow:hidden"><span class="t" style="left:0;top:2px;font-size:15px;color:#808080;letter-spacing:-0.826px">En</span></div>
<div style="left:257.7px;top:161.30px;width:14px;height:21px;overflow:hidden"><span class="t" style="left:0;top:2px;font-size:15px;color:#808080;letter-spacing:-0.751px">up</span></div>
<div style="left:257.7px;top:181.30px;width:14px;height:21px;overflow:hidden"><span class="t" style="left:0;top:2px;font-size:15px;color:#808080;letter-spacing:-0.338px">lin</span></div>
<div style="left:287.5px;top:161.30px;width:13px;height:21px;overflow:hidden"><span class="t" style="left:0;top:2px;font-size:15px;color:#808080;letter-spacing:-0.713px">Ta</span></div>
<div style="left:287.5px;top:181.30px;width:13.5px;height:21px;overflow:hidden"><span class="t" style="left:0;top:2px;font-size:15px;color:#808080;letter-spacing:-0.356px">inf</span></div>
<span class="t" style="left:317.70px;top:163.30px;font-size:15px;color:#808080;letter-spacing:-0.845px;">Add</span>
<span class="t" style="left:317.70px;top:183.30px;font-size:15px;color:#808080;letter-spacing:-0.225px;">file</span>
<span class="t" style="left:367.70px;top:183.30px;font-size:15px;color:#808080;letter-spacing:-0.375px;">#</span>
<svg class="i" style="left:380px;top:184px" width="8" height="13"><path d="M4 13 V1.500 M0.500 5 L4 1 L7.500 5" fill="none" stroke="#8c8c8c" stroke-width="1.200"/></svg>
<div style="left:375.5px;top:122px;width:2.4px;height:2.4px;background:#8c8c8c;border-radius:50%;"></div>
<div style="left:375.5px;top:126.5px;width:2.4px;height:2.4px;background:#8c8c8c;border-radius:50%;"></div>
<div style="left:375.5px;top:131px;width:2.4px;height:2.4px;background:#8c8c8c;border-radius:50%;"></div>
<div style="left:369.5px;top:219.5px;width:20px;height:28px;background:#bdbdbd;border-radius:3px;"></div>
<div style="left:74px;top:172px;width:1px;height:37px;background:#181818;"></div>
<div style="left:74px;top:209px;width:1px;height:48px;background:#0e0e0e;"></div>
<div style="left:119px;top:112px;width:1px;height:97px;background:#181818;"></div>
<div style="left:119px;top:209px;width:1px;height:48px;background:#0e0e0e;"></div>
<div style="left:154px;top:172px;width:1px;height:37px;background:#181818;"></div>
<div style="left:154px;top:209px;width:1px;height:48px;background:#0e0e0e;"></div>
<div style="left:199px;top:112px;width:1px;height:97px;background:#181818;"></div>
<div style="left:199px;top:209px;width:1px;height:48px;background:#0e0e0e;"></div>
<div style="left:249px;top:112px;width:1px;height:97px;background:#181818;"></div>
<div style="left:249px;top:209px;width:1px;height:48px;background:#0e0e0e;"></div>
<div style="left:279px;top:112px;width:1px;height:97px;background:#181818;"></div>
<div style="left:279px;top:209px;width:1px;height:48px;background:#0e0e0e;"></div>
<div style="left:309px;top:112px;width:1px;height:97px;background:#181818;"></div>
<div style="left:309px;top:209px;width:1px;height:48px;background:#0e0e0e;"></div>
<div style="left:359px;top:112px;width:1px;height:97px;background:#181818;"></div>
<div style="left:359px;top:209px;width:1px;height:48px;background:#0e0e0e;"></div>
<div style="left:1607px;top:112px;width:1px;height:97px;background:#181818;"></div>
<div style="left:1607px;top:209px;width:1px;height:48px;background:#0e0e0e;"></div>
<div style="left:1637px;top:112px;width:1px;height:97px;background:#181818;"></div>
<div style="left:1637px;top:209px;width:1px;height:48px;background:#0e0e0e;"></div>
<div style="left:1807px;top:112px;width:1px;height:97px;background:#181818;"></div>
<div style="left:1807px;top:209px;width:1px;height:48px;background:#0e0e0e;"></div>
<div style="left:1864px;top:112px;width:17px;height:145px;background:#111111;"></div>
<span class="t" style="left:1529.50px;top:183.80px;font-size:15px;color:#808080;letter-spacing:-0.373px;">pleted date</span>
<div style="left:1615px;top:161.30px;width:14px;height:21px;overflow:hidden"><span class="t" style="left:0;top:2px;font-size:15px;color:#808080;letter-spacing:-0.863px">Da</span></div>
<div style="left:1615px;top:181.30px;width:14px;height:21px;overflow:hidden"><span class="t" style="left:0;top:2px;font-size:15px;color:#808080;letter-spacing:-0.356px">fle</span></div>
<span class="t" style="left:1645.60px;top:183.80px;font-size:15px;color:#808080;letter-spacing:-0.715px;">Task supply date</span>
<div style="left:1815.7px;top:181.80px;width:48.8px;height:21px;overflow:hidden"><span class="t" style="left:0;top:2px;font-size:15px;color:#808080;letter-spacing:-0.695px">Previous</span></div>
<div style="left:1586.4px;top:122px;width:2.4px;height:2.4px;background:#8c8c8c;border-radius:50%;"></div>
<div style="left:1586.4px;top:126.5px;width:2.4px;height:2.4px;background:#8c8c8c;border-radius:50%;"></div>
<div style="left:1586.4px;top:131px;width:2.4px;height:2.4px;background:#8c8c8c;border-radius:50%;"></div>
<div style="left:1786px;top:122px;width:2.4px;height:2.4px;background:#8c8c8c;border-radius:50%;"></div>
<div style="left:1786px;top:126.5px;width:2.4px;height:2.4px;background:#8c8c8c;border-radius:50%;"></div>
<div style="left:1786px;top:131px;width:2.4px;height:2.4px;background:#8c8c8c;border-radius:50%;"></div>
<div style="left:1540px;top:219.5px;width:24px;height:27.5px;background:#1a1a1a;border-radius:3px;"></div>
<svg class="i" style="left:1544.5px;top:225.75px;color:#8c8c8c" width="15" height="15"><use href="#clock"/></svg>
<div style="left:1570px;top:219.5px;width:28px;height:27.5px;background:#1a1a1a;border-radius:3px;"></div>
<svg class="i" style="left:1577.5px;top:227.25px;color:#8c8c8c" width="13" height="12"><use href="#funnel"/></svg>
<div style="left:1646.7px;top:219.5px;width:67.5px;height:27.5px;background:#838383;border-radius:3px 0 0 3px;"></div>
<div style="left:1714px;top:219.5px;width:25px;height:27.5px;background:#1a1a1a;border-radius:3px;"></div>
<svg class="i" style="left:1720.0px;top:225.75px;color:#8c8c8c" width="13" height="15"><use href="#cal"/></svg>
<div style="left:1739px;top:219.5px;width:25px;height:27.5px;background:#1a1a1a;border-radius:3px;"></div>
<svg class="i" style="left:1744.0px;top:225.75px;color:#8c8c8c" width="15" height="15"><use href="#clock"/></svg>
<div style="left:1769px;top:219.5px;width:29px;height:27.5px;background:#1a1a1a;border-radius:3px;"></div>
<svg class="i" style="left:1777.0px;top:227.25px;color:#8c8c8c" width="13" height="12"><use href="#funnel"/></svg>
<div style="left:38px;top:257px;width:1826px;height:44px;background:#272727;overflow:hidden;"></div>
<svg class="i" style="left:48px;top:270.3px;" width="16" height="16"><use href="#boxes"/></svg>
<svg class="i" style="left:129px;top:270.3px;" width="16" height="16"><use href="#gplus"/></svg>
<svg class="i" style="left:169px;top:270.3px;color:#2b1b19" width="16" height="16"><use href="#redx"/></svg>
<svg class="i" style="left:216px;top:270.3px;" width="16" height="16"><use href="#splitg"/></svg>
<svg class="i" style="left:258.3px;top:270.8px;" width="16" height="16"><use href="#envlink"/></svg>
<svg class="i" style="left:288.5px;top:270.3px;" width="16" height="16"><use href="#userpen"/></svg>
<svg class="i" style="left:326px;top:270.3px;" width="16" height="16"><use href="#oplus"/></svg>
<span class="t" style="left:367.50px;top:271.10px;font-size:15px;color:#808080;letter-spacing:-0.375px;">1</span>
<div style="left:1500px;top:265.8px;width:107px;height:25px;background:#55692e;border-radius:9px;"></div>
<span class="t" style="left:1535.00px;top:271.10px;font-size:15px;color:#161a10;letter-spacing:-1.154px;">024 10:05</span>
<div style="left:1615.6px;top:269.8px;width:16px;height:16px;background:#4a4a4a;border-radius:50%;"></div>
<div style="left:1646px;top:265.8px;width:114px;height:24.5px;border:1px dotted #383838;border-radius:9px;"></div>
<span class="t" style="left:1656.5px;top:272.30px;font-size:15px;color:#808080;letter-spacing:0.4px"><span style="font-size:10.7px;position:relative;top:-1.5px;letter-spacing:0">__</span>/<span style="font-size:10.7px;position:relative;top:-1.5px;letter-spacing:0">__</span>/<span style="font-size:10.7px;position:relative;top:-1.5px;letter-spacing:0">____</span> <span style="font-size:10.7px;position:relative;top:-1.5px;letter-spacing:0">__</span>:<span style="font-size:10.7px;position:relative;top:-1.5px;letter-spacing:0">__</span></span>
<div style="left:1815.7px;top:269.3px;width:60px;height:19px;border:1px dotted #383838;border-radius:4px;"></div>
<div style="left:1822px;top:269.10px;width:42.5px;height:21px;overflow:hidden"><span class="t" style="left:0;top:2px;font-size:15px;color:#808080;letter-spacing:-0.475px">Flow</span></div>
<div style="left:38px;top:301px;width:1826px;height:44px;background:#262b38;overflow:hidden;"></div>
<svg class="i" style="left:48px;top:314.3px;" width="16" height="16"><use href="#boxes"/></svg>
<svg class="i" style="left:129px;top:314.3px;" width="16" height="16"><use href="#gplus"/></svg>
<svg class="i" style="left:169px;top:314.3px;color:#1e1514" width="16" height="16"><use href="#redx"/></svg>
<svg class="i" style="left:216px;top:314.3px;" width="16" height="16"><use href="#splitg"/></svg>
<svg class="i" style="left:258.3px;top:314.8px;" width="16" height="16"><use href="#envlink"/></svg>
<svg class="i" style="left:288.5px;top:314.3px;" width="16" height="16"><use href="#userpen"/></svg>
<svg class="i" style="left:326px;top:314.3px;" width="16" height="16"><use href="#oplus"/></svg>
<span class="t" style="left:367.50px;top:315.10px;font-size:15px;color:#808080;letter-spacing:-0.375px;">2</span>
<div style="left:1500px;top:309.8px;width:107px;height:25px;background:#55692e;border-radius:9px;"></div>
<span class="t" style="left:1535.00px;top:315.10px;font-size:15px;color:#161a10;letter-spacing:-1.154px;">024 10:07</span>
<div style="left:1615.6px;top:313.8px;width:16px;height:16px;background:#4a4a4a;border-radius:50%;"></div>
<div style="left:1646px;top:309.8px;width:114px;height:24.5px;border:1px dotted #383838;border-radius:9px;"></div>
<span class="t" style="left:1656.5px;top:316.30px;font-size:15px;color:#808080;letter-spacing:0.4px"><span style="font-size:10.7px;position:relative;top:-1.5px;letter-spacing:0">__</span>/<span style="font-size:10.7px;position:relative;top:-1.5px;letter-spacing:0">__</span>/<span style="font-size:10.7px;position:relative;top:-1.5px;letter-spacing:0">____</span> <span style="font-size:10.7px;position:relative;top:-1.5px;letter-spacing:0">__</span>:<span style="font-size:10.7px;position:relative;top:-1.5px;letter-spacing:0">__</span></span>
<div style="left:1815.7px;top:313.3px;width:60px;height:19px;border:1px dotted #383838;border-radius:4px;"></div>
<div style="left:1822px;top:313.10px;width:42.5px;height:21px;overflow:hidden"><span class="t" style="left:0;top:2px;font-size:15px;color:#808080;letter-spacing:-0.319px">All pre</span></div>
<div style="left:38px;top:345px;width:1826px;height:44px;background:#272727;overflow:hidden;"></div>
<svg class="i" style="left:48px;top:358.3px;" width="16" height="16"><use href="#boxes"/></svg>
<svg class="i" style="left:129px;top:358.3px;" width="16" height="16"><use href="#gplus"/></svg>
<svg class="i" style="left:169px;top:358.3px;color:#1e1514" width="16" height="16"><use href="#redx"/></svg>
<svg class="i" style="left:216px;top:358.3px;" width="16" height="16"><use href="#splitg"/></svg>
<svg class="i" style="left:258.3px;top:358.8px;" width="16" height="16"><use href="#envlink"/></svg>
<svg class="i" style="left:288.5px;top:358.3px;" width="16" height="16"><use href="#userpen"/></svg>
<svg class="i" style="left:326px;top:358.3px;" width="16" height="16"><use href="#oplus"/></svg>
<span class="t" style="left:367.50px;top:359.10px;font-size:15px;color:#808080;letter-spacing:-0.375px;">3</span>
<div style="left:1500px;top:353.8px;width:107px;height:25px;background:#55692e;border-radius:9px;"></div>
<span class="t" style="left:1535.00px;top:359.10px;font-size:15px;color:#161a10;letter-spacing:-1.154px;">024 10:09</span>
<div style="left:1615.6px;top:357.8px;width:16px;height:16px;background:#4a4a4a;border-radius:50%;"></div>
<div style="left:1646px;top:353.8px;width:114px;height:24.5px;border:1px dotted #383838;border-radius:9px;"></div>
<span class="t" style="left:1656.5px;top:360.30px;font-size:15px;color:#808080;letter-spacing:0.4px"><span style="font-size:10.7px;position:relative;top:-1.5px;letter-spacing:0">__</span>/<span style="font-size:10.7px;position:relative;top:-1.5px;letter-spacing:0">__</span>/<span style="font-size:10.7px;position:relative;top:-1.5px;letter-spacing:0">____</span> <span style="font-size:10.7px;position:relative;top:-1.5px;letter-spacing:0">__</span>:<span style="font-size:10.7px;position:relative;top:-1.5px;letter-spacing:0">__</span></span>
<div style="left:1815.7px;top:357.3px;width:60px;height:19px;border:1px dotted #383838;border-radius:4px;"></div>
<div style="left:1822px;top:357.10px;width:42.5px;height:21px;overflow:hidden"><span class="t" style="left:0;top:2px;font-size:15px;color:#808080;letter-spacing:-0.319px">All pre</span></div>
<div style="left:38px;top:389px;width:1826px;height:40px;background:#272727;overflow:hidden;"></div>
<svg class="i" style="left:48px;top:399.8px;" width="16" height="16"><use href="#boxes"/></svg>
<svg class="i" style="left:129px;top:399.8px;" width="16" height="16"><use href="#gplus"/></svg>
<svg class="i" style="left:169px;top:399.8px;color:#6e1212" width="16" height="16"><use href="#redx"/></svg>
<svg class="i" style="left:216px;top:399.8px;" width="16" height="16"><use href="#splitg"/></svg>
<svg class="i" style="left:258.3px;top:400.3px;" width="16" height="16"><use href="#envlink"/></svg>
<svg class="i" style="left:288.5px;top:399.8px;" width="16" height="16"><use href="#userpen"/></svg>
<svg class="i" style="left:326px;top:399.8px;" width="16" height="16"><use href="#oplus"/></svg>
<span class="t" style="left:367.50px;top:400.60px;font-size:15px;color:#808080;letter-spacing:-0.375px;">4</span>
<div style="left:1480px;top:395.3px;width:107.5px;height:24px;border:1px dotted #383838;border-radius:9px;"></div>
<span class="t" style="left:1535px;top:401.80px;font-size:15px;color:#808080;letter-spacing:0.4px"><span style="font-size:10.7px;position:relative;top:-1.5px;letter-spacing:0">_</span> <span style="font-size:10.7px;position:relative;top:-1.5px;letter-spacing:0">__</span>:<span style="font-size:10.7px;position:relative;top:-1.5px;letter-spacing:0">__</span></span>
<div style="left:1615.6px;top:399.3px;width:16px;height:16px;background:#4a4a4a;border-radius:50%;"></div>
<div style="left:1646px;top:395.3px;width:114px;height:24.5px;border:1px dotted #383838;border-radius:9px;"></div>
<span class="t" style="left:1656.5px;top:401.80px;font-size:15px;color:#808080;letter-spacing:0.4px"><span style="font-size:10.7px;position:relative;top:-1.5px;letter-spacing:0">__</span>/<span style="font-size:10.7px;position:relative;top:-1.5px;letter-spacing:0">__</span>/<span style="font-size:10.7px;position:relative;top:-1.5px;letter-spacing:0">____</span> <span style="font-size:10.7px;position:relative;top:-1.5px;letter-spacing:0">__</span>:<span style="font-size:10.7px;position:relative;top:-1.5px;letter-spacing:0">__</span></span>
<div style="left:1815.7px;top:398.8px;width:60px;height:19px;border:1px dotted #383838;border-radius:4px;"></div>
<div style="left:1822px;top:398.60px;width:42.5px;height:21px;overflow:hidden"><span class="t" style="left:0;top:2px;font-size:15px;color:#808080;letter-spacing:-0.319px">All pre</span></div>
<div style="left:38px;top:429px;width:1826px;height:40px;background:#272727;overflow:hidden;"></div>
<svg class="i" style="left:48px;top:439.8px;" width="16" height="16"><use href="#boxes"/></svg>
<svg class="i" style="left:129px;top:439.8px;" width="16" height="16"><use href="#gplus"/></svg>
<svg class="i" style="left:169px;top:439.8px;color:#6e1212" width="16" height="16"><use href="#redx"/></svg>
<svg class="i" style="left:216px;top:439.8px;" width="16" height="16"><use href="#splitg"/></svg>
<svg class="i" style="left:258.3px;top:440.3px;" width="16" height="16"><use href="#envlink"/></svg>
<svg class="i" style="left:288.5px;top:439.8px;" width="16" height="16"><use href="#userpen"/></svg>
<svg class="i" style="left:326px;top:439.8px;" width="16" height="16"><use href="#oplus"/></svg>
<span class="t" style="left:367.50px;top:440.60px;font-size:15px;color:#808080;letter-spacing:-0.375px;">5</span>
<div style="left:1480px;top:435.3px;width:107.5px;height:24px;border:1px dotted #383838;border-radius:9px;"></div>
<span class="t" style="left:1535px;top:441.80px;font-size:15px;color:#808080;letter-spacing:0.4px"><span style="font-size:10.7px;position:relative;top:-1.5px;letter-spacing:0">_</span> <span style="font-size:10.7px;position:relative;top:-1.5px;letter-spacing:0">__</span>:<span style="font-size:10.7px;position:relative;top:-1.5px;letter-spacing:0">__</span></span>
<div style="left:1615.6px;top:439.3px;width:16px;height:16px;background:#4a4a4a;border-radius:50%;"></div>
<div style="left:1646px;top:435.3px;width:114px;height:24.5px;border:1px dotted #383838;border-radius:9px;"></div>
<span class="t" style="left:1656.5px;top:441.80px;font-size:15px;color:#808080;letter-spacing:0.4px"><span style="font-size:10.7px;position:relative;top:-1.5px;letter-spacing:0">__</span>/<span style="font-size:10.7px;position:relative;top:-1.5px;letter-spacing:0">__</span>/<span style="font-size:10.7px;position:relative;top:-1.5px;letter-spacing:0">____</span> <span style="font-size:10.7px;position:relative;top:-1.5px;letter-spacing:0">__</span>:<span style="font-size:10.7px;position:relative;top:-1.5px;letter-spacing:0">__</span></span>
<div style="left:1815.7px;top:438.8px;width:60px;height:19px;border:1px dotted #383838;border-radius:4px;"></div>
<div style="left:1822px;top:438.60px;width:42.5px;height:21px;overflow:hidden"><span class="t" style="left:0;top:2px;font-size:15px;color:#808080;letter-spacing:-0.475px">Flow</span></div>
<div style="left:38px;top:469px;width:1826px;height:40px;background:#212121;overflow:hidden;"></div>
<svg class="i" style="left:48px;top:479.8px;" width="16" height="16"><use href="#boxes"/></svg>
<svg class="i" style="left:88px;top:479.8px;" width="16" height="16"><use href="#boxesx"/></svg>
<svg class="i" style="left:129px;top:479.8px;" width="16" height="16"><use href="#gplus"/></svg>
<svg class="i" style="left:169px;top:479.8px;color:#6e1212" width="16" height="16"><use href="#redx"/></svg>
<svg class="i" style="left:216px;top:479.8px;" width="16" height="16"><use href="#split"/></svg>
<svg class="i" style="left:258.3px;top:480.3px;" width="16" height="16"><use href="#envlink"/></svg>
<svg class="i" style="left:288.5px;top:479.8px;" width="16" height="16"><use href="#userpen"/></svg>
<svg class="i" style="left:326px;top:479.8px;" width="16" height="16"><use href="#oplus"/></svg>
<span class="t" style="left:367.50px;top:480.60px;font-size:15px;color:#808080;letter-spacing:-0.375px;">6</span>
<div style="left:1480px;top:475.3px;width:107.5px;height:24px;border:1px dotted #383838;border-radius:9px;"></div>
<span class="t" style="left:1535px;top:481.80px;font-size:15px;color:#808080;letter-spacing:0.4px"><span style="font-size:10.7px;position:relative;top:-1.5px;letter-spacing:0">_</span> <span style="font-size:10.7px;position:relative;top:-1.5px;letter-spacing:0">__</span>:<span style="font-size:10.7px;position:relative;top:-1.5px;letter-spacing:0">__</span></span>
<div style="left:1615.6px;top:479.3px;width:16px;height:16px;background:#4a4a4a;border-radius:50%;"></div>
<div style="left:1646px;top:475.3px;width:114px;height:24.5px;border:1px dotted #383838;border-radius:9px;"></div>
<span class="t" style="left:1656.5px;top:481.80px;font-size:15px;color:#808080;letter-spacing:0.4px"><span style="font-size:10.7px;position:relative;top:-1.5px;letter-spacing:0">__</span>/<span style="font-size:10.7px;position:relative;top:-1.5px;letter-spacing:0">__</span>/<span style="font-size:10.7px;position:relative;top:-1.5px;letter-spacing:0">____</span> <span style="font-size:10.7px;position:relative;top:-1.5px;letter-spacing:0">__</span>:<span style="font-size:10.7px;position:relative;top:-1.5px;letter-spacing:0">__</span></span>
<div style="left:1815.7px;top:478.8px;width:60px;height:19px;border:1px dotted #383838;border-radius:4px;"></div>
<div style="left:1822px;top:478.60px;width:42.5px;height:21px;overflow:hidden"><span class="t" style="left:0;top:2px;font-size:15px;color:#808080;letter-spacing:-0.428px">#5 Eng</span></div>
<div style="left:38px;top:509px;width:1826px;height:40px;background:#212121;overflow:hidden;"></div>
<svg class="i" style="left:48px;top:519.8px;" width="16" height="16"><use href="#boxes"/></svg>
<svg class="i" style="left:129px;top:519.8px;" width="16" height="16"><use href="#gplus"/></svg>
<svg class="i" style="left:169px;top:519.8px;color:#6e1212" width="16" height="16"><use href="#redx"/></svg>
<svg class="i" style="left:216px;top:519.8px;" width="16" height="16"><use href="#split"/></svg>
<svg class="i" style="left:258.3px;top:520.3px;" width="16" height="16"><use href="#envlink"/></svg>
<svg class="i" style="left:288.5px;top:519.8px;" width="16" height="16"><use href="#userpen"/></svg>
<svg class="i" style="left:326px;top:519.8px;" width="16" height="16"><use href="#oplus"/></svg>
<span class="t" style="left:367.50px;top:520.60px;font-size:15px;color:#808080;letter-spacing:-0.375px;">7</span>
<div style="left:1480px;top:515.3px;width:107.5px;height:24px;border:1px dotted #383838;border-radius:9px;"></div>
<span class="t" style="left:1535px;top:521.80px;font-size:15px;color:#808080;letter-spacing:0.4px"><span style="font-size:10.7px;position:relative;top:-1.5px;letter-spacing:0">_</span> <span style="font-size:10.7px;position:relative;top:-1.5px;letter-spacing:0">__</span>:<span style="font-size:10.7px;position:relative;top:-1.5px;letter-spacing:0">__</span></span>
<div style="left:1615.6px;top:519.3px;width:16px;height:16px;background:#4a4a4a;border-radius:50%;"></div>
<div style="left:1646px;top:515.3px;width:114px;height:24.5px;border:1px dotted #383838;border-radius:9px;"></div>
<span class="t" style="left:1656.5px;top:521.80px;font-size:15px;color:#808080;letter-spacing:0.4px"><span style="font-size:10.7px;position:relative;top:-1.5px;letter-spacing:0">__</span>/<span style="font-size:10.7px;position:relative;top:-1.5px;letter-spacing:0">__</span>/<span style="font-size:10.7px;position:relative;top:-1.5px;letter-spacing:0">____</span> <span style="font-size:10.7px;position:relative;top:-1.5px;letter-spacing:0">__</span>:<span style="font-size:10.7px;position:relative;top:-1.5px;letter-spacing:0">__</span></span>
<div style="left:1815.7px;top:518.8px;width:60px;height:19px;border:1px dotted #383838;border-radius:4px;"></div>
<div style="left:1822px;top:518.60px;width:42.5px;height:21px;overflow:hidden"><span class="t" style="left:0;top:2px;font-size:15px;color:#808080;letter-spacing:-0.475px">Flow</span></div>
<div style="left:38px;top:549px;width:1826px;height:40px;background:#272727;overflow:hidden;"></div>
<svg class="i" style="left:48px;top:559.8px;" width="16" height="16"><use href="#boxes"/></svg>
<svg class="i" style="left:88px;top:559.8px;" width="16" height="16"><use href="#boxesx"/></svg>
<svg class="i" style="left:129px;top:559.8px;" width="16" height="16"><use href="#gplus"/></svg>
<svg class="i" style="left:169px;top:559.8px;color:#6e1212" width="16" height="16"><use href="#redx"/></svg>
<svg class="i" style="left:216px;top:559.8px;" width="16" height="16"><use href="#split"/></svg>
<svg class="i" style="left:258.3px;top:560.3px;" width="16" height="16"><use href="#envlink"/></svg>
<svg class="i" style="left:288.5px;top:559.8px;" width="16" height="16"><use href="#userpen"/></svg>
<svg class="i" style="left:326px;top:559.8px;" width="16" height="16"><use href="#oplus"/></svg>
<span class="t" style="left:367.50px;top:560.60px;font-size:15px;color:#808080;letter-spacing:-0.375px;">8</span>
<div style="left:1480px;top:555.3px;width:107.5px;height:24px;border:1px dotted #383838;border-radius:9px;"></div>
<span class="t" style="left:1535px;top:561.80px;font-size:15px;color:#808080;letter-spacing:0.4px"><span style="font-size:10.7px;position:relative;top:-1.5px;letter-spacing:0">_</span> <span style="font-size:10.7px;position:relative;top:-1.5px;letter-spacing:0">__</span>:<span style="font-size:10.7px;position:relative;top:-1.5px;letter-spacing:0">__</span></span>
<div style="left:1615.6px;top:559.3px;width:16px;height:16px;background:#4a4a4a;border-radius:50%;"></div>
<div style="left:1646px;top:555.3px;width:114px;height:24.5px;border:1px dotted #383838;border-radius:9px;"></div>
<span class="t" style="left:1656.5px;top:561.80px;font-size:15px;color:#808080;letter-spacing:0.4px"><span style="font-size:10.7px;position:relative;top:-1.5px;letter-spacing:0">__</span>/<span style="font-size:10.7px;position:relative;top:-1.5px;letter-spacing:0">__</span>/<span style="font-size:10.7px;position:relative;top:-1.5px;letter-spacing:0">____</span> <span style="font-size:10.7px;position:relative;top:-1.5px;letter-spacing:0">__</span>:<span style="font-size:10.7px;position:relative;top:-1.5px;letter-spacing:0">__</span></span>
<div style="left:1815.7px;top:558.8px;width:60px;height:19px;border:1px dotted #383838;border-radius:4px;"></div>
<div style="left:1822px;top:558.60px;width:42.5px;height:21px;overflow:hidden"><span class="t" style="left:0;top:2px;font-size:15px;color:#808080;letter-spacing:-0.428px">#5 Eng</span></div>
<div style="left:38px;top:589px;width:1826px;height:40px;background:#272727;overflow:hidden;"></div>
<svg class="i" style="left:48px;top:599.8px;" width="16" height="16"><use href="#boxes"/></svg>
<svg class="i" style="left:129px;top:599.8px;" width="16" height="16"><use href="#gplus"/></svg>
<svg class="i" style="left:169px;top:599.8px;color:#6e1212" width="16" height="16"><use href="#redx"/></svg>
<svg class="i" style="left:216px;top:599.8px;" width="16" height="16"><use href="#split"/></svg>
<svg class="i" style="left:258.3px;top:600.3px;" width="16" height="16"><use href="#envlink"/></svg>
<svg class="i" style="left:288.5px;top:599.8px;" width="16" height="16"><use href="#userpen"/></svg>
<svg class="i" style="left:326px;top:599.8px;" width="16" height="16"><use href="#oplus"/></svg>
<span class="t" style="left:367.50px;top:600.60px;font-size:15px;color:#808080;letter-spacing:-0.375px;">9</span>
<div style="left:1480px;top:595.3px;width:107.5px;height:24px;border:1px dotted #383838;border-radius:9px;"></div>
<span class="t" style="left:1535px;top:601.80px;font-size:15px;color:#808080;letter-spacing:0.4px"><span style="font-size:10.7px;position:relative;top:-1.5px;letter-spacing:0">_</span> <span style="font-size:10.7px;position:relative;top:-1.5px;letter-spacing:0">__</span>:<span style="font-size:10.7px;position:relative;top:-1.5px;letter-spacing:0">__</span></span>
<div style="left:1615.6px;top:599.3px;width:16px;height:16px;background:#4a4a4a;border-radius:50%;"></div>
<div style="left:1646px;top:595.3px;width:114px;height:24.5px;border:1px dotted #383838;border-radius:9px;"></div>
<span class="t" style="left:1656.5px;top:601.80px;font-size:15px;color:#808080;letter-spacing:0.4px"><span style="font-size:10.7px;position:relative;top:-1.5px;letter-spacing:0">__</span>/<span style="font-size:10.7px;position:relative;top:-1.5px;letter-spacing:0">__</span>/<span style="font-size:10.7px;position:relative;top:-1.5px;letter-spacing:0">____</span> <span style="font-size:10.7px;position:relative;top:-1.5px;letter-spacing:0">__</span>:<span style="font-size:10.7px;position:relative;top:-1.5px;letter-spacing:0">__</span></span>
<div style="left:1815.7px;top:598.8px;width:60px;height:19px;border:1px dotted #383838;border-radius:4px;"></div>
<div style="left:1822px;top:598.60px;width:42.5px;height:21px;overflow:hidden"><span class="t" style="left:0;top:2px;font-size:15px;color:#808080;letter-spacing:-0.475px">Flow</span></div>
<div style="left:38px;top:629px;width:1826px;height:30px;background:#212121;overflow:hidden;"></div>
<svg class="i" style="left:48px;top:640.3px;" width="16" height="16"><use href="#boxes"/></svg>
<svg class="i" style="left:88px;top:640.3px;" width="16" height="16"><use href="#boxesx"/></svg>
<svg class="i" style="left:129px;top:640.3px;" width="16" height="16"><use href="#gplus"/></svg>
<svg class="i" style="left:169px;top:640.3px;color:#6e1212" width="16" height="16"><use href="#redx"/></svg>
<svg class="i" style="left:216px;top:640.3px;" width="16" height="16"><use href="#split"/></svg>
<svg class="i" style="left:258.3px;top:640.8px;" width="16" height="16"><use href="#envlink"/></svg>
<svg class="i" style="left:288.5px;top:640.3px;" width="16" height="16"><use href="#userpen"/></svg>
<svg class="i" style="left:326px;top:640.3px;" width="16" height="16"><use href="#oplus"/></svg>
<span class="t" style="left:367.50px;top:641.10px;font-size:15px;color:#808080;letter-spacing:-0.751px;">10</span>
<div style="left:1480px;top:635.8px;width:107.5px;height:24px;border:1px dotted #383838;border-radius:9px;"></div>
<span class="t" style="left:1535px;top:642.30px;font-size:15px;color:#808080;letter-spacing:0.4px"><span style="font-size:10.7px;position:relative;top:-1.5px;letter-spacing:0">_</span> <span style="font-size:10.7px;position:relative;top:-1.5px;letter-spacing:0">__</span>:<span style="font-size:10.7px;position:relative;top:-1.5px;letter-spacing:0">__</span></span>
<div style="left:1615.6px;top:639.8px;width:16px;height:16px;background:#4a4a4a;border-radius:50%;"></div>
<div style="left:1646px;top:635.8px;width:114px;height:24.5px;border:1px dotted #383838;border-radius:9px;"></div>
<span class="t" style="left:1656.5px;top:642.30px;font-size:15px;color:#808080;letter-spacing:0.4px"><span style="font-size:10.7px;position:relative;top:-1.5px;letter-spacing:0">__</span>/<span style="font-size:10.7px;position:relative;top:-1.5px;letter-spacing:0">__</span>/<span style="font-size:10.7px;position:relative;top:-1.5px;letter-spacing:0">____</span> <span style="font-size:10.7px;position:relative;top:-1.5px;letter-spacing:0">__</span>:<span style="font-size:10.7px;position:relative;top:-1.5px;letter-spacing:0">__</span></span>
<div style="left:1815.7px;top:639.3px;width:60px;height:19px;border:1px dotted #383838;border-radius:4px;"></div>
<div style="left:1822px;top:639.10px;width:42.5px;height:21px;overflow:hidden"><span class="t" style="left:0;top:2px;font-size:15px;color:#808080;letter-spacing:-0.428px">#5 Eng</span></div>
<div style="left:74px;top:257px;width:1px;height:403px;background:#111;"></div>
<div style="left:74px;top:676px;width:1px;height:37px;background:#111;"></div>
<div style="left:119px;top:257px;width:1px;height:403px;background:#111;"></div>
<div style="left:119px;top:676px;width:1px;height:37px;background:#111;"></div>
<div style="left:154px;top:257px;width:1px;height:403px;background:#111;"></div>
<div style="left:154px;top:676px;width:1px;height:37px;background:#111;"></div>
<div style="left:199px;top:257px;width:1px;height:403px;background:#111;"></div>
<div style="left:199px;top:676px;width:1px;height:37px;background:#111;"></div>
<div style="left:249px;top:257px;width:1px;height:403px;background:#111;"></div>
<div style="left:249px;top:676px;width:1px;height:37px;background:#111;"></div>
<div style="left:279px;top:257px;width:1px;height:403px;background:#111;"></div>
<div style="left:279px;top:676px;width:1px;height:37px;background:#111;"></div>
<div style="left:309px;top:257px;width:1px;height:403px;background:#111;"></div>
<div style="left:309px;top:676px;width:1px;height:37px;background:#111;"></div>
<div style="left:359px;top:257px;width:1px;height:403px;background:#111;"></div>
<div style="left:359px;top:676px;width:1px;height:37px;background:#111;"></div>
<div style="left:1607px;top:257px;width:1px;height:403px;background:#111;"></div>
<div style="left:1607px;top:676px;width:1px;height:37px;background:#111;"></div>
<div style="left:1637px;top:257px;width:1px;height:403px;background:#111;"></div>
<div style="left:1637px;top:676px;width:1px;height:37px;background:#111;"></div>
<div style="left:1807px;top:257px;width:1px;height:403px;background:#111;"></div>
<div style="left:1807px;top:676px;width:1px;height:37px;background:#111;"></div>
<div style="left:1864px;top:257px;width:17px;height:403px;background:#8a8a8a;"></div>
<div style="left:1865.5px;top:273.5px;width:14px;height:279.5px;background:#646464;"></div>
<svg class="i" style="left:1868.5px;top:263.5px;color:#5a5a5a" width="8" height="5"><use href="#triu"/></svg>
<svg class="i" style="left:1868.5px;top:648px;color:#2c2c2c" width="8" height="5"><use href="#tri"/></svg>
<div style="left:38px;top:659.5px;width:1843px;height:16.5px;background:#8a8a8a;border-top:1px solid #9a9a9a;"></div>
<div style="left:56px;top:660.5px;width:1300px;height:14.5px;background:#646464;"></div>
<svg class="i" style="left:45px;top:663px;color:#3a3a3a" width="5" height="9"><use href="#tril"/></svg>
<svg class="i" style="left:1854px;top:663px;color:#2c2c2c" width="5" height="9"><use href="#trir"/></svg>
<div style="left:1864px;top:659.5px;width:17px;height:16.5px;background:#7d7d7d;"></div>
<div style="left:38px;top:676px;width:1826px;height:37px;background:#272727;"></div>
<div style="left:74px;top:676px;width:1px;height:37px;background:#111;"></div>
<div style="left:119px;top:676px;width:1px;height:37px;background:#111;"></div>
<div style="left:154px;top:676px;width:1px;height:37px;background:#111;"></div>
<div style="left:199px;top:676px;width:1px;height:37px;background:#111;"></div>
<div style="left:249px;top:676px;width:1px;height:37px;background:#111;"></div>
<div style="left:279px;top:676px;width:1px;height:37px;background:#111;"></div>
<div style="left:309px;top:676px;width:1px;height:37px;background:#111;"></div>
<div style="left:359px;top:676px;width:1px;height:37px;background:#111;"></div>
<div style="left:1607px;top:676px;width:1px;height:37px;background:#111;"></div>
<div style="left:1637px;top:676px;width:1px;height:37px;background:#111;"></div>
<div style="left:1807px;top:676px;width:1px;height:37px;background:#111;"></div>
<div style="left:1864px;top:676px;width:17px;height:37px;background:#191919;"></div>
<div style="left:38px;top:713px;width:1843px;height:39.5px;background:linear-gradient(#131313,#1f1f1f);"></div>
<svg class="i" style="left:46px;top:722px" width="17" height="17"><path d="M0.500 1 H15.500 L9.500 8 V14 L6.500 12.500 V8Z" fill="#5a5f63"/><rect x="0.500" y="0.500" width="15" height="1.500" fill="#3b8fb4"/><circle cx="12.500" cy="13" r="3.500" fill="#5d8325"/><path d="M12.500 11 v4 M10.500 13 h4" stroke="#b4bcaa" stroke-width="1"/><circle cx="8" cy="14" r="1" fill="#c08a2a"/></svg>
<span class="t" style="left:71.00px;top:726.57px;font-size:13.5px;color:#808080;letter-spacing:-0.922px;">Range options</span>
<div style="left:154.5px;top:720.3px;width:101px;height:26.2px;background:linear-gradient(#82591f,#7a531c);border:1px solid #5c2313;border-radius:4px;"></div>
<svg class="i" style="left:164px;top:722.5px;color:#65533c;--gbg:#7e561e" width="17" height="17"><use href="#gear"/></svg>
<span class="t" style="left:186.50px;top:727.57px;font-size:13.5px;color:#0e0b06;letter-spacing:-0.278px;">Grid layout</span>
<svg class="i" style="left:266px;top:721.5px;color:#565656;--gbg:#191919" width="17" height="17"><use href="#gear"/></svg>
<span class="t" style="left:288.00px;top:726.57px;font-size:13.5px;color:#808080;letter-spacing:-0.969px;">Settings</span>
<svg class="i" style="left:341px;top:722px;" width="16" height="16"><use href="#gplus"/></svg>
<span class="t" style="left:363.50px;top:726.57px;font-size:13.5px;color:#808080;letter-spacing:-1.011px;">Add</span>
<div style="left:38px;top:753.5px;width:1843px;height:35px;background:linear-gradient(#171717,#202020);"></div>
<svg class="i" style="left:51.5px;top:766.5px;color:#727272" width="8.5" height="9.5"><use href="#first"/></svg>
<svg class="i" style="left:83px;top:766.5px;color:#727272" width="5.5" height="9.5"><use href="#tril"/></svg>
<div style="left:101px;top:756px;width:30px;height:30px;background:#333;"></div>
<span class="t" style="left:113.50px;top:763.80px;font-size:15px;color:#808080;letter-spacing:-0.375px;">1</span>
<svg class="i" style="left:143.5px;top:766.5px;color:#727272" width="5.5" height="9.5"><use href="#trir"/></svg>
<svg class="i" style="left:171.5px;top:766.5px;color:#727272" width="8.5" height="9.5"><use href="#last"/></svg>
<span class="t" style="left:205.00px;top:764.23px;font-size:14.5px;color:#808080;letter-spacing:-2.788px;">Page</span>
<div style="left:239px;top:757px;width:68px;height:28px;background:#8a8a8a;border-radius:3px;"></div>
<span class="t" style="left:248.00px;top:763.80px;font-size:15px;color:#222;letter-spacing:-0.375px;">1</span>
<span class="t" style="left:315.00px;top:764.23px;font-size:14.5px;color:#808080;letter-spacing:-1.395px;">of 1</span>
<div style="left:350px;top:757px;width:60px;height:28px;background:#8a8a8a;border-radius:3px;"></div>
<span class="t" style="left:358.00px;top:763.80px;font-size:15px;color:#222;letter-spacing:-1.685px;">20</span>
<span class="t" style="left:1666.00px;top:765.07px;font-size:13.5px;color:#808080;letter-spacing:-0.665px;">1 - 13 of 13 items</span>
<div style="left:1773px;top:759px;width:26px;height:26px;background:#121212;border-radius:8px;"></div>
<svg class="i" style="left:1778px;top:765px" width="16" height="14"><path d="M8 0 V14" stroke="#a0a0a0" stroke-width="1.300"/><path d="M0 7 L4 4 V10Z M16 7 L12 4 V10Z" fill="#a0a0a0"/><path d="M3 7 H6.500 M9.500 7 H13" stroke="#a0a0a0" stroke-width="1.300"/></svg>
<div style="left:1813px;top:759px;width:26px;height:26px;background:#121212;border-radius:8px;"></div>
<svg class="i" style="left:1818px;top:764px" width="17" height="16"><path d="M1 1.500 H8 C10 4 10 8 9.500 15 H6.500 C7 9 6 6 1 3Z" fill="#a0a0a0"/><path d="M10 6 L16 11 M16 5 L10.500 10.500 M12.500 2 V6" stroke="#a0a0a0" stroke-width="1.400" fill="none"/></svg>
<div style="left:1853px;top:759px;width:26px;height:26px;background:#121212;border-radius:8px;"></div>

<svg class="i" style="left:1858px;top:764px;color:#a0a0a0" width="16" height="16"><use href="#refresh"/></svg>
<div style="left:38px;top:789.5px;width:1843px;height:75.5px;background:#121112;border-radius:4px;"></div>
<div style="left:206px;top:804px;width:73px;height:45.5px;background:#1b1b1b;"></div>
<div style="left:279px;top:804px;width:110px;height:45.5px;background:#2a2a2a;"></div>
<span class="t" style="left:52.00px;top:821.07px;font-size:13.5px;color:#808080;letter-spacing:-0.663px;">Enable column filtering</span>
<svg class="i" style="left:178px;top:812px" width="24" height="25"><path d="M0.500 2 H21.500 L13.500 11 V21 L8.500 18 V11Z" fill="#55585b"/><rect x="0" y="0.500" width="22" height="2.200" fill="#3b8fb4"/><path d="M10 17.500 L14 21.500 L23 12.500" fill="none" stroke="#3f8f2f" stroke-width="2.600"/><circle cx="10" cy="22.500" r="1.500" fill="#b5822a"/></svg>
<span class="t" style="left:210.40px;top:822.07px;font-size:13.5px;color:#808080;letter-spacing:-0.856px;">Update date</span>
<div style="left:305px;top:813.5px;width:90px;height:27.5px;background:#8a8a8a;border-radius:3px;"></div>
<div style="left:35px;top:875px;width:76.5px;height:33.5px;background:linear-gradient(#222,#1c1c1c);border:1px solid #151515;border-radius:4px;"></div>
<svg class="i" style="left:44.5px;top:880.5px;" width="23" height="23"><use href="#noentryd"/></svg>
<span class="t" style="left:73.70px;top:884.57px;font-size:13.5px;color:#808080;letter-spacing:-1.254px;">Close</span>
<div style="left:138.5px;top:868px;width:1747px;height:46px;background:#121112;border-radius:4px;"></div>
<div style="left:386px;top:10.5px;width:1148px;height:923.7px;background:#4d4d4d;border-radius:4px 4px 0 0;box-shadow:0 0 7px 1px rgba(0,0,0,.75);"></div>
<div style="left:386px;top:10.5px;width:1148px;height:41px;background:linear-gradient(#3c3c3c,#2a2a2a);border-radius:4px 4px 0 0;"></div>
<svg class="i" style="left:398px;top:20px;" width="24" height="21.5"><use href="#logo"/></svg>
<span class="t" style="left:431.50px;top:24.30px;font-size:13px;color:#ffffff;letter-spacing:-0.581px;">OOONA Manager - User task</span>
<span class="t" style="left:590.00px;top:24.30px;font-size:13px;color:#ffffff;font-weight:700;letter-spacing:-0.875px;">Transcribing</span>
<span class="t" style="left:662.80px;top:24.30px;font-size:13px;color:#ffffff;letter-spacing:-0.420px;">update for order</span>
<span class="t" style="left:753.50px;top:24.30px;font-size:13px;color:#ffffff;font-weight:700;letter-spacing:-0.616px;">189336</span>
<span class="t" style="left:798.20px;top:24.30px;font-size:13px;color:#ffffff;letter-spacing:-0.400px;">from</span>
<span class="t" style="left:826.30px;top:24.30px;font-size:13px;color:#ffffff;font-weight:700;letter-spacing:-1.108px;">English</span>
<span class="t" style="left:870.70px;top:24.30px;font-size:13px;color:#ffffff;letter-spacing:-0.742px;">to</span>
<span class="t" style="left:884.60px;top:24.30px;font-size:13px;color:#ffffff;font-weight:700;letter-spacing:-1.175px;">English</span>
<div style="left:1446px;top:31.8px;width:10px;height:2.4px;background:#fff;"></div>
<div style="left:1476px;top:26px;width:10px;height:10px;border:1px solid #fff;border-top:3px solid #fff;"></div>
<svg class="i" style="left:1506px;top:26px" width="10" height="10"><path d="M0.700 0.700 L9.300 9.300 M9.300 0.700 L0.700 9.300" stroke="#fff" stroke-width="2"/></svg>
<svg class="i" style="left:638px;top:71px;" width="26" height="26"><use href="#calperson"/></svg>
<span class="t" style="left:678.00px;top:75.46px;font-size:18.6px;color:#ffffff;letter-spacing:-0.288px;">User task</span>
<span class="t" style="left:760.25px;top:75.46px;font-size:18.6px;color:#ffffff;font-weight:700;letter-spacing:-0.262px;">Transcribing</span>
<span class="t" style="left:874.75px;top:75.46px;font-size:18.6px;color:#ffffff;letter-spacing:0.426px;">update for order</span>
<span class="t" style="left:1019.75px;top:75.46px;font-size:18.6px;color:#ffffff;font-weight:700;letter-spacing:0.436px;">189336</span>
<span class="t" style="left:1089.75px;top:75.46px;font-size:18.6px;color:#ffffff;letter-spacing:0.683px;">from</span>
<span class="t" style="left:1134.75px;top:75.46px;font-size:18.6px;color:#ffffff;font-weight:700;letter-spacing:-0.570px;">English</span>
<span class="t" style="left:1203.50px;top:75.46px;font-size:18.6px;color:#ffffff;letter-spacing:1.988px;">to</span>
<span class="t" style="left:1227.25px;top:75.46px;font-size:18.6px;color:#ffffff;font-weight:700;letter-spacing:-0.695px;">English</span>
<div style="left:398px;top:107px;width:1124px;height:746.5px;background:#232221;border-radius:4px;"></div>
<div style="left:1499px;top:113px;width:17px;height:735px;background:#f1f1f1;"></div>
<div style="left:1501px;top:129.5px;width:13.5px;height:422.5px;background:#c1c1c1;"></div>
<svg class="i" style="left:1503.5px;top:120px;color:#a3a3a3" width="8" height="4.5"><use href="#triu"/></svg>
<svg class="i" style="left:1503.5px;top:836px;color:#505050" width="8" height="4.5"><use href="#tri"/></svg>
<div style="left:404px;top:113px;width:1095px;height:44.5px;background:linear-gradient(#3b3b3b,#262626);border:1px solid #4a4a4a;border-bottom-color:#444;"></div>
<svg class="i" style="left:413px;top:119.2px;" width="32" height="32"><use href="#info"/></svg>
<span class="t" style="left:455.00px;top:128.74px;font-size:15.6px;color:#ffffff;font-weight:700;letter-spacing:0.337px;">Order information</span>
<svg class="i" style="left:1477px;top:132.5px;" width="10" height="6"><use href="#chev"/></svg>
<div style="left:405px;top:158px;width:1091px;height:222.5px;background:#262423;border:1px solid #3a3938;border-right-color:#4c4b4a;border-top:none;border-radius:4px;"></div>
<span class="t" style="left:417.00px;top:176.16px;font-size:12.8px;color:#fff;letter-spacing:-0.858px;">Status</span>
<span class="t" style="left:635.00px;top:176.16px;font-size:12.8px;color:#fff;font-weight:700;letter-spacing:-0.743px;">In Progress</span>
<span class="t" style="left:850.00px;top:176.16px;font-size:12.8px;color:#fff;letter-spacing:-0.402px;">Order status</span>
<span class="t" style="left:1000.00px;top:176.16px;font-size:12.8px;color:#fff;font-weight:700;letter-spacing:-0.684px;">Active</span>
<span class="t" style="left:1266.50px;top:176.16px;font-size:12.8px;color:#fff;letter-spacing:-0.544px;">Script</span>
<span class="t" style="left:1421.00px;top:176.16px;font-size:12.8px;color:#fff;font-weight:700;letter-spacing:-0.402px;">With script</span>
<span class="t" style="left:417.00px;top:214.16px;font-size:12.8px;color:#fff;letter-spacing:-0.556px;">Source language</span>
<span class="t" style="left:635.00px;top:214.16px;font-size:12.8px;color:#fff;font-weight:700;letter-spacing:-0.954px;">English</span>
<span class="t" style="left:850.00px;top:214.16px;font-size:12.8px;color:#fff;letter-spacing:-0.415px;">Target language</span>
<span class="t" style="left:1000.00px;top:214.16px;font-size:12.8px;color:#fff;font-weight:700;letter-spacing:-0.954px;">English</span>
<span class="t" style="left:417.00px;top:252.16px;font-size:12.8px;color:#fff;letter-spacing:-0.640px;">Customer</span>
<span class="t" style="left:635.00px;top:252.16px;font-size:12.8px;color:#fff;font-weight:700;letter-spacing:-0.737px;">Barcelos Broductions</span>
<span class="t" style="left:850.00px;top:252.16px;font-size:12.8px;color:#fff;letter-spacing:-0.177px;">Title</span>
<span class="t" style="left:1000.00px;top:252.16px;font-size:12.8px;color:#fff;font-weight:700;letter-spacing:-0.644px;">ASR - All Shoes Repairman</span>
<span class="t" style="left:1266.50px;top:252.16px;font-size:12.8px;color:#fff;letter-spacing:-0.611px;">Previous task</span>
<svg class="i" style="left:1421px;top:250px" width="16" height="16"><circle cx="8" cy="8" r="8" fill="#8cc63f"/><path d="M4 8.300 L7 11.200 L12.200 5.200" fill="none" stroke="#fff" stroke-width="2.200"/></svg>
<span class="t" style="left:417.00px;top:290.16px;font-size:12.8px;color:#fff;letter-spacing:-1.083px;">Season</span>
<span class="t" style="left:635.00px;top:290.16px;font-size:12.8px;color:#fff;font-weight:700;letter-spacing:-0.320px;">0</span>
<span class="t" style="left:850.00px;top:290.16px;font-size:12.8px;color:#fff;letter-spacing:-0.710px;">Episode</span>
<span class="t" style="left:1000.00px;top:290.16px;font-size:12.8px;color:#fff;font-weight:700;letter-spacing:-0.320px;">0</span>
<span class="t" style="left:1266.50px;top:290.16px;font-size:12.8px;color:#fff;letter-spacing:-0.441px;">Episode Title</span>
<span class="t" style="left:417.00px;top:338.16px;font-size:12.8px;color:#fff;letter-spacing:-0.426px;">Task confirmation status</span>
<div style="left:639.7px;top:335px;width:16px;height:16px;background:#c3c3c3;border-radius:50%;"></div>
<div style="left:664px;top:326px;width:288px;height:39.5px;background:#eef5fd;border-radius:8px;"></div>
<svg class="i" style="left:669px;top:331px;" width="24" height="24"><use href="#info"/></svg>
<span class="t" style="left:701.50px;top:338.90px;font-size:14.3px;color:#62636f;letter-spacing:-0.049px;">No confirmation is required for this task</span>
<span class="t" style="left:1266.50px;top:338.16px;font-size:12.8px;color:#fff;letter-spacing:-0.495px;">Voucher number</span>
<span class="t" style="left:1421.00px;top:338.16px;font-size:12.8px;color:#fff;font-weight:700;letter-spacing:-0.157px;">189336-2</span>
<div style="left:404px;top:382px;width:1095px;height:44.5px;background:linear-gradient(#3b3b3b,#262626);border:1px solid #4a4a4a;border-bottom-color:#444;"></div>
<svg class="i" style="left:413px;top:393.9px;" width="24" height="24"><use href="#taskinfo"/></svg>
<span class="t" style="left:447.00px;top:397.89px;font-size:15.6px;color:#ffffff;font-weight:700;letter-spacing:0.165px;">Task information</span>
<svg class="i" style="left:1477px;top:401.5px;" width="10" height="6"><use href="#chev"/></svg>
<div style="left:405px;top:427px;width:1091px;height:210px;background:#262423;border:1px solid #3a3938;border-right-color:#4c4b4a;border-top:none;border-radius:4px;"></div>
<span class="t" style="left:422.00px;top:453.16px;font-size:12.8px;color:#fff;letter-spacing:-0.969px;">Resource</span>
<svg class="i" style="left:507px;top:452px;" width="16" height="12"><use href="#people"/></svg>
<div style="left:527.3px;top:450.5px;width:15.5px;height:15px;border:1.500px solid #f2f2f2;border-radius:2px;background:#262423;"></div>
<div style="left:580px;top:447px;width:48px;height:28px;background:#fff;border-radius:3px;"></div>
<span class="t" style="left:589.00px;top:453.73px;font-size:14.5px;color:#333;letter-spacing:-0.727px;">1159</span>
<div style="left:643px;top:439px;width:213px;height:42.8px;background:#fff;border-radius:3px 0 0 3px;"></div>
<div style="left:856px;top:439px;width:25px;height:42.8px;background:linear-gradient(#3a3a39,#2a2928);border-radius:0 3px 3px 0;"></div>
<svg class="i" style="left:864.5px;top:457.2px;color:#fff" width="8" height="6.4"><use href="#tri"/></svg>
<div style="left:657px;top:443px;width:110px;height:29.5px;background:#f5c44e;border-radius:2px;"></div>
<span class="t" style="left:660.00px;top:450.73px;font-size:14.5px;color:#333;letter-spacing:-1.000px;">ASR Engine</span>
<div style="left:769px;top:443px;width:79px;height:24.5px;background:#f5c44e;border-radius:2px;"></div>
<span class="t" style="left:797.00px;top:455.42px;font-size:12.5px;color:#333;letter-spacing:-1.544px;">ENG</span>
<svg class="i" style="left:931.5px;top:452px;" width="17" height="13"><use href="#env"/></svg>
<svg class="i" style="left:955.5px;top:448.8px;" width="17" height="17"><use href="#userinfo"/></svg>
<svg class="i" style="left:980px;top:448.8px;" width="17" height="17"><use href="#userx"/></svg>
<span class="t" style="left:1026.00px;top:453.16px;font-size:12.8px;color:#fff;letter-spacing:-0.623px;">Task supply date</span>
<div style="left:1178px;top:447px;width:183px;height:28px;background:#fff;border-radius:3px 0 0 3px;"></div>
<div style="left:1361px;top:447px;width:25.5px;height:28px;background:linear-gradient(#3b3b3b,#2b2b2b);border-right:1px solid #2c2c2c;"></div>
<div style="left:1386.5px;top:447px;width:24.5px;height:28px;background:linear-gradient(#3b3b3b,#2b2b2b);border-radius:0 3px 3px 0;"></div>
<svg class="i" style="left:1367px;top:452.5px;color:#fff" width="14" height="16"><use href="#cal"/></svg>
<svg class="i" style="left:1391px;top:453px;color:#fff" width="16" height="16"><use href="#clock"/></svg>
<svg class="i" style="left:1456px;top:446px;" width="25" height="25"><use href="#calcheck"/></svg>
<span class="t" style="left:422.00px;top:503.16px;font-size:12.8px;color:#fff;letter-spacing:-1.434px;">Team</span>
<div style="left:643px;top:497px;width:213px;height:28px;background:#fff;border-radius:3px 0 0 3px;"></div>
<div style="left:856px;top:497px;width:25px;height:28px;background:linear-gradient(#3a3a39,#2a2928);border-radius:0 3px 3px 0;"></div>
<svg class="i" style="left:864.5px;top:507.8px;color:#fff" width="8" height="6.4"><use href="#tri"/></svg>
<span class="t" style="left:651.50px;top:503.30px;font-size:15px;color:#222;letter-spacing:-0.503px;">Not set</span>
<div style="left:1177px;top:512.5px;width:236px;height:1px;background:#2f3131;"></div>
<span class="t" style="left:1026.00px;top:551.16px;font-size:12.8px;color:#fff;letter-spacing:-0.498px;">Step delivery date</span>
<div style="left:1178px;top:545px;width:183px;height:28px;background:#fff;border-radius:3px 0 0 3px;"></div>
<div style="left:1361px;top:545px;width:25.5px;height:28px;background:linear-gradient(#3b3b3b,#2b2b2b);border-right:1px solid #2c2c2c;"></div>
<div style="left:1386.5px;top:545px;width:24.5px;height:28px;background:linear-gradient(#3b3b3b,#2b2b2b);border-radius:0 3px 3px 0;"></div>
<svg class="i" style="left:1367px;top:550.5px;color:#fff" width="14" height="16"><use href="#cal"/></svg>
<svg class="i" style="left:1391px;top:551px;color:#fff" width="16" height="16"><use href="#clock"/></svg>
<span class="t" style="left:422.00px;top:598.66px;font-size:12.8px;color:#fff;letter-spacing:-1.300px;">Flag</span>
<div style="left:643px;top:593px;width:213px;height:29px;background:#fff;border-radius:3px 0 0 3px;"></div>
<div style="left:856px;top:593px;width:25px;height:29px;background:linear-gradient(#3a3a39,#2a2928);border-radius:0 3px 3px 0;"></div>
<svg class="i" style="left:864.5px;top:604.3px;color:#fff" width="8" height="6.4"><use href="#tri"/></svg>
<svg class="i" style="left:651px;top:597px;" width="17" height="15"><use href="#flag"/></svg>
<span class="t" style="left:673.50px;top:600.30px;font-size:15px;color:#222;letter-spacing:-0.372px;">Not flagged</span>
<span class="t" style="left:1026.00px;top:599.16px;font-size:12.8px;color:#fff;letter-spacing:-0.629px;">Email sent on</span>
<div style="left:1178px;top:593px;width:183px;height:28px;background:#fff;border-radius:3px 0 0 3px;"></div>
<div style="left:1361px;top:593px;width:25.5px;height:28px;background:#8b8b8b;border-right:1px solid #838383;"></div>
<div style="left:1386.5px;top:593px;width:24.5px;height:28px;background:#8b8b8b;border-radius:0 3px 3px 0;"></div>
<svg class="i" style="left:1367px;top:598.5px;color:#eeeeee" width="14" height="16"><use href="#cal"/></svg>
<svg class="i" style="left:1391px;top:599px;color:#eeeeee" width="16" height="16"><use href="#clock"/></svg>
<div style="left:404px;top:639px;width:1095px;height:44.5px;background:linear-gradient(#3b3b3b,#262626);border:1px solid #4a4a4a;border-bottom-color:#444;"></div>
<svg class="i" style="left:413px;top:650.9px;" width="24" height="24"><use href="#taskcost"/></svg>
<span class="t" style="left:447.00px;top:654.59px;font-size:15.6px;color:#ffffff;font-weight:700;letter-spacing:0.053px;">Task cost information</span>
<svg class="i" style="left:1477px;top:658.5px;" width="10" height="6"><use href="#chev"/></svg>
<div style="left:405px;top:684px;width:1091px;height:168px;background:#262423;border:1px solid #3a3938;border-right-color:#4c4b4a;border-top:none;border-radius:4px;"></div>
<span class="t" style="left:417.00px;top:707.16px;font-size:12.8px;color:#fff;letter-spacing:-0.930px;">Rate :</span>
<span class="t" style="left:508.50px;top:707.16px;font-size:12.8px;color:#fff;font-weight:700;letter-spacing:-0.571px;">Engine rate</span>
<span class="t" style="left:933.00px;top:707.16px;font-size:12.8px;color:#fff;letter-spacing:-0.330px;">Unit:</span>
<span class="t" style="left:417.00px;top:755.16px;font-size:12.8px;color:#fff;letter-spacing:-0.340px;">Duration</span>
<span class="t" style="left:508.50px;top:755.16px;font-size:12.8px;color:#fff;font-weight:700;letter-spacing:-0.463px;">00:02:23</span>
<span class="t" style="left:720.50px;top:755.16px;font-size:12.8px;color:#fff;letter-spacing:-0.371px;">Total amount due :</span>
<svg class="i" style="left:826.5px;top:754.5px;" width="17" height="17"><use href="#mag"/></svg>
<div style="left:929px;top:749px;width:123px;height:27.8px;background:#a9a9a9;border-radius:3px 0 0 3px;"></div>
<span class="t" style="left:937.00px;top:755.73px;font-size:14.5px;color:#3e3e3e;letter-spacing:-0.741px;">0.06</span>
<div style="left:1052px;top:749px;width:25px;height:14px;background:linear-gradient(#353534,#2a2928);border-radius:0 3px 0 0;"></div>
<div style="left:1052px;top:763px;width:25px;height:13.8px;background:linear-gradient(#323130,#272625);border-radius:0 0 3px 0;"></div>
<svg class="i" style="left:1060.5px;top:753.5px;color:#a9a9a9" width="8.5" height="6"><use href="#triu"/></svg>
<svg class="i" style="left:1060.5px;top:767px;color:#a9a9a9" width="8.5" height="6"><use href="#tri"/></svg>
<span class="t" style="left:1086.75px;top:755.16px;font-size:12.8px;color:#fff;letter-spacing:-0.450px;">Total surcharges/discounts :</span>
<span class="t" style="left:1338.00px;top:755.16px;font-size:12.8px;color:#fff;letter-spacing:-0.971px;">0.00</span>
<span class="t" style="left:417.00px;top:803.16px;font-size:12.8px;color:#fff;letter-spacing:-0.671px;">Currency :</span>
<div style="left:509px;top:797px;width:147px;height:27.5px;background:#a9a9a9;border-radius:3px 0 0 3px;"></div>
<span class="t" style="left:518.00px;top:803.30px;font-size:15px;color:#444;letter-spacing:-0.836px;">US Dollar</span>
<div style="left:656px;top:797px;width:25px;height:27.5px;background:linear-gradient(#353534,#282726);border-radius:0 3px 3px 0;"></div>
<svg class="i" style="left:664.5px;top:808.5px;color:#a9a9a9" width="8" height="5.5"><use href="#tri"/></svg>
<span class="t" style="left:720.50px;top:803.16px;font-size:12.8px;color:#fff;letter-spacing:-0.417px;">Duration % of task</span>
<span class="t" style="left:929.00px;top:803.73px;font-size:14.5px;color:#ffffff;letter-spacing:-1.029px;">100%</span>
<span class="t" style="left:1086.75px;top:803.16px;font-size:12.8px;color:#fff;letter-spacing:-0.483px;">Rounding manner</span>
<div style="left:1343.5px;top:798.5px;width:32.5px;height:25px;background:#2b2a29;border:1px solid #232221;border-radius:3px;"></div>
<svg class="i" style="left:1352.5px;top:803.5px;" width="15" height="15"><use href="#uparrow"/></svg>
<div style="left:1385px;top:798px;width:34px;height:26px;background:#3a5b9f;border:1px solid #4f6fb3;border-radius:3px;"></div>
<span class="t" style="left:1394.50px;top:801.99px;font-size:19.5px;color:#8d8f94;font-weight:700;letter-spacing:-0.527px;-webkit-text-stroke:1.1px #8d8f94;">Σ</span>
<div style="left:395px;top:881px;width:77px;height:33.5px;background:linear-gradient(#2e2e2e,#242424);border:1px solid #1f1f1f;border-radius:4px;"></div>
<svg class="i" style="left:404px;top:886px;" width="23.5" height="23.5"><use href="#noentry"/></svg>
<span class="t" style="left:433.50px;top:892.00px;font-size:13px;color:#ffffff;letter-spacing:-1.059px;">Close</span>
<div style="left:476px;top:881px;width:91px;height:33.5px;background:linear-gradient(#2e2e2e,#242424);border:1px solid #1f1f1f;border-radius:4px;"></div>
<svg class="i" style="left:485px;top:886px;" width="24" height="24"><use href="#alltasks"/></svg>
<span class="t" style="left:515.00px;top:892.00px;font-size:13px;color:#ffffff;letter-spacing:-0.675px;">All tasks</span>
<div style="left:571px;top:881px;width:71px;height:33.5px;background:linear-gradient(#2e2e2e,#242424);border:1px solid #1f1f1f;border-radius:4px;"></div>
<svg class="i" style="left:580px;top:886px;" width="23.5" height="23.5"><use href="#folders"/></svg>
<span class="t" style="left:610.00px;top:892.00px;font-size:13px;color:#ffffff;letter-spacing:-1.112px;">Files</span>
<div style="left:646px;top:881px;width:137px;height:33.5px;background:linear-gradient(#2e2e2e,#242424);border:1px solid #1f1f1f;border-radius:4px;"></div>
<svg class="i" style="left:655px;top:886px;" width="24" height="24"><use href="#logfile"/></svg>
<span class="t" style="left:685.00px;top:892.00px;font-size:13px;color:#ffffff;letter-spacing:-0.764px;">Task changes log</span>
<span class="t" style="left:658.50px;top:899.10px;font-size:6.5px;color:#fff;font-weight:700;letter-spacing:1.209px;">LOG</span>
<span class="t" style="left:837.00px;top:920.96px;font-size:9.5px;color:#fff;letter-spacing:-0.018px;"><b>Copyright © 2012</b></span>
<span class="t" style="left:918.5px;top:920.96px;font-size:9.500px;font-style:italic;font-weight:700;letter-spacing:-0.200px"><span style="color:#7a7a7a">O</span><span style="color:#f0c040">O</span><span style="color:#5bb8e8">O</span></span>
<span class="t" style="left:940.50px;top:920.96px;font-size:9.5px;color:#8a8a8a;font-weight:700;letter-spacing:-0.472px;">NA.NET</span>
<span class="t" style="left:976.70px;top:920.96px;font-size:9.5px;color:#fff;font-weight:700;letter-spacing:-0.171px;">ltd. All rights reserved.</span>
<span class="t" style="left:837.00px;top:933.76px;font-size:9.5px;color:#8a8a8a;letter-spacing:-0.018px;"><b>Copyright © 2012</b></span>
<span class="t" style="left:918.5px;top:933.76px;font-size:9.500px;font-style:italic;font-weight:700;letter-spacing:-0.200px"><span style="color:#444">O</span><span style="color:#86691f">O</span><span style="color:#2e647b">O</span></span>
<span class="t" style="left:940.50px;top:933.76px;font-size:9.5px;color:#4a4a4a;font-weight:700;letter-spacing:-0.472px;">NA.NET</span>
<span class="t" style="left:976.70px;top:933.76px;font-size:9.5px;color:#8a8a8a;font-weight:700;letter-spacing:-0.171px;">ltd. All rights reserved.</span>
<div style="left:277px;top:301px;width:38px;height:40px;border:5px solid #1fa12e;"></div>
<div style="left:276px;top:345px;width:40px;height:40px;background:#1fa12e;border-radius:50%;"></div>
<span class="t" style="left:287.70px;top:351.26px;font-size:31px;color:#0a0a0a;letter-spacing:-0.776px;-webkit-text-stroke:0.5px #0a0a0a;">1</span>
<div style="left:288.5px;top:374.4px;width:6.45px;height:3.4px;background:#1fa12e;"></div>
<div style="left:299.05px;top:374.4px;width:6px;height:3.4px;background:#1fa12e;"></div>
<div style="left:360px;top:636px;width:40px;height:40px;background:#1fa12e;border-radius:50%;"></div>
<span class="t" style="left:371.20px;top:642.06px;font-size:31px;color:#0a0a0a;letter-spacing:-0.776px;-webkit-text-stroke:0.4px #0a0a0a;">2</span>
<div style="left:402px;top:636px;width:1097px;height:214.5px;border:5px solid #1fa12e;"></div>
</body></html>
